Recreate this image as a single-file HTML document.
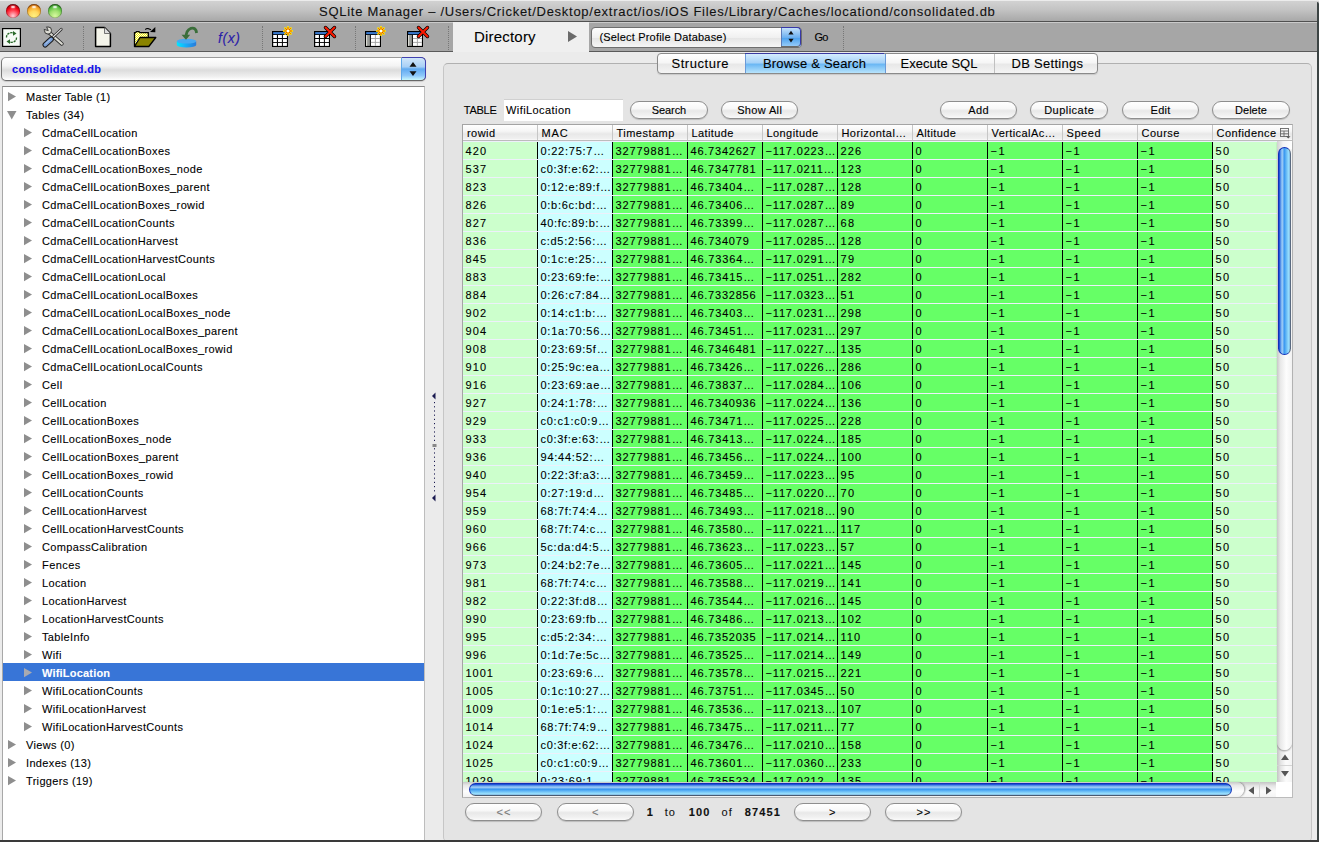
<!DOCTYPE html>
<html><head><meta charset="utf-8"><style>
html,body{margin:0;padding:0;width:1319px;height:842px;overflow:hidden;background:#ebebeb;font-family:"Liberation Sans",sans-serif;}
.r{position:absolute;}
.t{position:absolute;white-space:nowrap;-webkit-text-stroke:0.1px currentColor;}
svg{overflow:visible}
</style></head><body>
<div class="r" style="left:0px;top:0px;width:1319px;height:21px;background:linear-gradient(#ececec 0,#ececec 1px,#d2d2d2 1px,#c4c4c4 45%,#a8a8a8);"></div>
<div class="r" style="left:0px;top:21px;width:1319px;height:1px;background:#505050;"></div>
<div class="r" style="left:6px;top:4px;width:14px;height:14px;border-radius:50%;background:radial-gradient(circle at 50% 85%,#ffd0d8 0,#ff4050 40%,#f00010 62%,#c00010 80%,#801018 100%);box-shadow:inset 0 1px 1.5px rgba(0,0,0,.35), inset 0 0 0 0.6px rgba(0,0,0,.25);"></div>
<div class="r" style="left:11px;top:5.5px;width:4px;height:2px;border-radius:50%;background:rgba(255,255,255,.85);box-shadow:0 0 1.5px 0.5px rgba(255,255,255,.5)"></div>
<div class="r" style="left:27px;top:4px;width:14px;height:14px;border-radius:50%;background:radial-gradient(circle at 50% 85%,#fff080 0,#ffd860 35%,#f8a020 65%,#d06000 82%,#a03800 100%);box-shadow:inset 0 1px 1.5px rgba(0,0,0,.35), inset 0 0 0 0.6px rgba(0,0,0,.25);"></div>
<div class="r" style="left:32px;top:5.5px;width:4px;height:2px;border-radius:50%;background:rgba(255,255,255,.85);box-shadow:0 0 1.5px 0.5px rgba(255,255,255,.5)"></div>
<div class="r" style="left:48px;top:4px;width:14px;height:14px;border-radius:50%;background:radial-gradient(circle at 50% 85%,#d8f8a0 0,#a0e070 38%,#58c040 65%,#309020 82%,#1a5a10 100%);box-shadow:inset 0 1px 1.5px rgba(0,0,0,.35), inset 0 0 0 0.6px rgba(0,0,0,.25);"></div>
<div class="r" style="left:53px;top:5.5px;width:4px;height:2px;border-radius:50%;background:rgba(255,255,255,.85);box-shadow:0 0 1.5px 0.5px rgba(255,255,255,.5)"></div>
<div class="t" style="left:319.00px;top:5.00px;font-size:13px;line-height:13px;letter-spacing:0.725px;color:#111;">SQLite Manager – /Users/Cricket/Desktop/extract/ios/iOS Files/Library/Caches/locationd/consolidated.db</div>
<div class="r" style="left:0px;top:22px;width:1319px;height:1px;background:#cacaca;"></div>
<div class="r" style="left:0px;top:23px;width:1319px;height:28px;background:#a6a6a6;"></div>
<div class="r" style="left:0px;top:51px;width:1319px;height:1px;background:#5a5a5a;"></div>
<div class="r" style="left:453px;top:22px;width:136px;height:30px;background:#efefef;"></div>
<div class="t" style="left:474.00px;top:29.30px;font-size:15px;line-height:15px;letter-spacing:0.198px;color:#000;">Directory</div>
<svg class="r" style="left:568px;top:31px" width="10" height="11"><path d="M0 0L9 5.5L0 11Z" fill="#6a6a6a"/></svg>
<div class="r" style="left:83px;top:26px;width:0;height:24px;border-left:1px dotted #777;"></div>
<div class="r" style="left:262px;top:26px;width:0;height:24px;border-left:1px dotted #777;"></div>
<div class="r" style="left:355px;top:26px;width:0;height:24px;border-left:1px dotted #777;"></div>
<div class="r" style="left:448px;top:26px;width:0;height:24px;border-left:1px dotted #777;"></div>
<div class="r" style="left:843px;top:26px;width:0;height:24px;border-left:1px dotted #777;"></div>
<svg class="r" style="left:2px;top:28px" width="19" height="19" viewBox="0 0 19 19"><rect x="0.6" y="0.6" width="17.8" height="17.8" fill="#f6fbf6" stroke="#000" stroke-width="1.2"/><path d="M4.5 9.5 A5 4.5 0 0 1 12 5.3" fill="none" stroke="#2a6a2a" stroke-width="1.3" stroke-dasharray="2.4 0.8"/><path d="M11 3 L14.5 5.5 L11 7.8Z" fill="#2a6a2a"/><path d="M14.5 9.5 A5 4.5 0 0 1 7 13.7" fill="none" stroke="#2a6a2a" stroke-width="1.3" stroke-dasharray="2.4 0.8"/><path d="M8 11.2 L4.5 13.5 L8 16Z" fill="#2a6a2a"/></svg>
<svg class="r" style="left:42px;top:25px" width="23" height="23" viewBox="0 0 23 23"><path d="M6 6.5 L19.8 18.8" stroke="#2a2a2a" stroke-width="3.8" stroke-linecap="round"/><path d="M6 6.5 L19.8 18.8" stroke="#dcdcd4" stroke-width="2.2" stroke-linecap="round"/><circle cx="6" cy="5.5" r="3.6" fill="#dcdcd4" stroke="#2a2a2a" stroke-width="0.9"/><path d="M6.3 5.6 L4.6 1.2 L3.2 1.6 L1.6 3.3 L1.5 4.6Z" fill="#a6a6a6"/><path d="M6.3 5.6 L4.4 1.6 M6.3 5.6 L1.8 4.4" stroke="#2a2a2a" stroke-width="0.8"/><path d="M19.3 4.2 L9.5 13.5" stroke="#2a2a2a" stroke-width="2.6" stroke-linecap="round"/><path d="M19.3 4.2 L9.5 13.5" stroke="#e8e8e8" stroke-width="1.1" stroke-linecap="round"/><path d="M3.2 19.8 L9.2 14.2" stroke="#1a1a1a" stroke-width="5.4" stroke-linecap="round"/><path d="M3.2 19.8 L9.2 14.2" stroke="#7aa0d8" stroke-width="3.4" stroke-linecap="round"/><path d="M3.8 18.6 L8 14.8" stroke="#b8d0f0" stroke-width="1" stroke-linecap="round"/></svg>
<svg class="r" style="left:94px;top:26px" width="19" height="22" viewBox="0 0 19 22"><path d="M1.6 1.6 H10.5 L16.4 7.5 V20.4 H1.6Z" fill="#f4f4ea" stroke="#000" stroke-width="1.5" stroke-linejoin="round"/><path d="M10.5 1.6 V7.5 H16.4" fill="#ddd" stroke="#555" stroke-width="0.8"/></svg>
<svg class="r" style="left:133px;top:26px" width="25" height="22" viewBox="0 0 25 22"><defs><pattern id="chk" width="2" height="2" patternUnits="userSpaceOnUse"><rect width="2" height="2" fill="#f4f400"/><rect width="1" height="1" fill="#fffff0"/><rect x="1" y="1" width="1" height="1" fill="#fffff0"/></pattern></defs><path d="M1.5 20.5 V6.6 H2.5 L3.5 5.6 H6 L7 6.6 H15.3 V12" fill="url(#chk)" stroke="#000" stroke-width="1.3"/><path d="M1.5 20.5 L7 11.5 H22.8 L15.8 20.5Z" fill="#8a8400" stroke="#000" stroke-width="1.3" stroke-linejoin="round"/><path d="M12.3 3.6 Q13.5 2.2 15 2.6 Q16.5 3.2 18 3.8" fill="none" stroke="#000" stroke-width="1.1"/><path d="M17 6 L22.3 1 L22.3 6.2Z" fill="#000"/></svg>
<svg class="r" style="left:175px;top:25px" width="24" height="24" viewBox="0 0 24 24"><defs><linearGradient id="cyl" x1="0" x2="1"><stop offset="0" stop-color="#00e8ff"/><stop offset="0.5" stop-color="#18a8f8"/><stop offset="1" stop-color="#2a7ad8"/></linearGradient></defs><path d="M1.8 16.2 V20 A9.7 2.6 0 0 0 21.2 20 V16.2Z" fill="url(#cyl)"/><ellipse cx="11.5" cy="16.2" rx="9.7" ry="2.4" fill="#48a8f0"/><path d="M11.2 13 Q10.5 5.5 16 3.3 Q21 2.2 21.6 8" fill="none" stroke="#3a6e3a" stroke-width="2.8"/><path d="M6.5 9.8 L15.2 9.8 L11 14.8Z" fill="#3a6e3a"/></svg>
<div class="t" style="left:218.00px;top:31.15px;font-size:14px;line-height:14px;letter-spacing:0.599px;color:#2a20a8;font-style:italic;">f(x)</div>
<svg class="r" style="left:272px;top:31px" width="16" height="16" viewBox="0 0 16 16"><rect x="0" y="0" width="16" height="16" fill="#000"/><rect x="1.2" y="1.1" width="13.7" height="2.1" fill="#3a7ad0"/><rect x="1.2" y="4" width="3.7" height="3" fill="#fff"/><rect x="1.2" y="8" width="3.7" height="3" fill="#fff"/><rect x="1.2" y="11.9" width="3.7" height="3" fill="#fff"/><rect x="6" y="4" width="3.9" height="3" fill="#fff"/><rect x="6" y="8" width="3.9" height="3" fill="#fff"/><rect x="6" y="11.9" width="3.9" height="3" fill="#fff"/><rect x="10.9" y="4" width="4" height="3" fill="#fff"/><rect x="10.9" y="8" width="4" height="3" fill="#fff"/><rect x="10.9" y="11.9" width="4" height="3" fill="#fff"/></svg>
<svg class="r" style="left:282.6px;top:26.3px" width="10" height="10" viewBox="0 0 10 10"><line x1="6.00" y1="5.00" x2="9.00" y2="5.00" stroke="#ffe800" stroke-width="2.2" stroke-linecap="round"/><line x1="5.71" y1="5.71" x2="7.83" y2="7.83" stroke="#ffe800" stroke-width="2.2" stroke-linecap="round"/><line x1="5.00" y1="6.00" x2="5.00" y2="9.00" stroke="#ffe800" stroke-width="2.2" stroke-linecap="round"/><line x1="4.29" y1="5.71" x2="2.17" y2="7.83" stroke="#ffe800" stroke-width="2.2" stroke-linecap="round"/><line x1="4.00" y1="5.00" x2="1.00" y2="5.00" stroke="#ffe800" stroke-width="2.2" stroke-linecap="round"/><line x1="4.29" y1="4.29" x2="2.17" y2="2.17" stroke="#ffe800" stroke-width="2.2" stroke-linecap="round"/><line x1="5.00" y1="4.00" x2="5.00" y2="1.00" stroke="#ffe800" stroke-width="2.2" stroke-linecap="round"/><line x1="5.71" y1="4.29" x2="7.83" y2="2.17" stroke="#ffe800" stroke-width="2.2" stroke-linecap="round"/><line x1="6.40" y1="5.00" x2="8.80" y2="5.00" stroke="#e83000" stroke-width="0.9"/><line x1="5.99" y1="5.99" x2="7.69" y2="7.69" stroke="#e83000" stroke-width="0.9"/><line x1="5.00" y1="6.40" x2="5.00" y2="8.80" stroke="#e83000" stroke-width="0.9"/><line x1="4.01" y1="5.99" x2="2.31" y2="7.69" stroke="#e83000" stroke-width="0.9"/><line x1="3.60" y1="5.00" x2="1.20" y2="5.00" stroke="#e83000" stroke-width="0.9"/><line x1="4.01" y1="4.01" x2="2.31" y2="2.31" stroke="#e83000" stroke-width="0.9"/><line x1="5.00" y1="3.60" x2="5.00" y2="1.20" stroke="#e83000" stroke-width="0.9"/><line x1="5.99" y1="4.01" x2="7.69" y2="2.31" stroke="#e83000" stroke-width="0.9"/><circle cx="5" cy="5" r="1.3" fill="#fff"/></svg>
<svg class="r" style="left:314px;top:31px" width="16" height="16" viewBox="0 0 16 16"><rect x="0" y="0" width="16" height="16" fill="#000"/><rect x="1.2" y="1.1" width="13.7" height="2.1" fill="#3a7ad0"/><rect x="1.2" y="4" width="3.7" height="3" fill="#fff"/><rect x="1.2" y="8" width="3.7" height="3" fill="#fff"/><rect x="1.2" y="11.9" width="3.7" height="3" fill="#fff"/><rect x="6" y="4" width="3.9" height="3" fill="#fff"/><rect x="6" y="8" width="3.9" height="3" fill="#fff"/><rect x="6" y="11.9" width="3.9" height="3" fill="#fff"/><rect x="10.9" y="4" width="4" height="3" fill="#fff"/><rect x="10.9" y="8" width="4" height="3" fill="#fff"/><rect x="10.9" y="11.9" width="4" height="3" fill="#fff"/></svg>
<svg class="r" style="left:323.7px;top:26.4px" width="12" height="12" viewBox="0 0 12 12"><path d="M1.5 1.5 L10.5 10.5 M10.5 1.5 L1.5 10.5" stroke="#000" stroke-width="3.4" stroke-linecap="round"/><path d="M1.5 1.5 L10.5 10.5 M10.5 1.5 L1.5 10.5" stroke="#ff1a00" stroke-width="2" stroke-linecap="round"/></svg>
<svg class="r" style="left:365px;top:31px" width="16" height="16" viewBox="0 0 16 16"><rect x="0" y="0" width="16" height="16" fill="#000"/><rect x="1.2" y="1.1" width="13.7" height="2.1" fill="#3a7ad0"/><rect x="1.2" y="4" width="3.7" height="10.9" fill="#9a9c98"/><rect x="1.2" y="4" width="0.9" height="10.9" fill="#f0f0e8"/><rect x="5.9" y="4" width="9" height="10.9" fill="#fff"/><path d="M5.9 7.5H14.9M5.9 11.4H14.9M10.4 4V14.9" stroke="#a0a0a0" stroke-width="0.9"/></svg>
<svg class="r" style="left:375.6px;top:26.3px" width="10" height="10" viewBox="0 0 10 10"><line x1="6.00" y1="5.00" x2="9.00" y2="5.00" stroke="#ffe800" stroke-width="2.2" stroke-linecap="round"/><line x1="5.71" y1="5.71" x2="7.83" y2="7.83" stroke="#ffe800" stroke-width="2.2" stroke-linecap="round"/><line x1="5.00" y1="6.00" x2="5.00" y2="9.00" stroke="#ffe800" stroke-width="2.2" stroke-linecap="round"/><line x1="4.29" y1="5.71" x2="2.17" y2="7.83" stroke="#ffe800" stroke-width="2.2" stroke-linecap="round"/><line x1="4.00" y1="5.00" x2="1.00" y2="5.00" stroke="#ffe800" stroke-width="2.2" stroke-linecap="round"/><line x1="4.29" y1="4.29" x2="2.17" y2="2.17" stroke="#ffe800" stroke-width="2.2" stroke-linecap="round"/><line x1="5.00" y1="4.00" x2="5.00" y2="1.00" stroke="#ffe800" stroke-width="2.2" stroke-linecap="round"/><line x1="5.71" y1="4.29" x2="7.83" y2="2.17" stroke="#ffe800" stroke-width="2.2" stroke-linecap="round"/><line x1="6.40" y1="5.00" x2="8.80" y2="5.00" stroke="#e83000" stroke-width="0.9"/><line x1="5.99" y1="5.99" x2="7.69" y2="7.69" stroke="#e83000" stroke-width="0.9"/><line x1="5.00" y1="6.40" x2="5.00" y2="8.80" stroke="#e83000" stroke-width="0.9"/><line x1="4.01" y1="5.99" x2="2.31" y2="7.69" stroke="#e83000" stroke-width="0.9"/><line x1="3.60" y1="5.00" x2="1.20" y2="5.00" stroke="#e83000" stroke-width="0.9"/><line x1="4.01" y1="4.01" x2="2.31" y2="2.31" stroke="#e83000" stroke-width="0.9"/><line x1="5.00" y1="3.60" x2="5.00" y2="1.20" stroke="#e83000" stroke-width="0.9"/><line x1="5.99" y1="4.01" x2="7.69" y2="2.31" stroke="#e83000" stroke-width="0.9"/><circle cx="5" cy="5" r="1.3" fill="#fff"/></svg>
<svg class="r" style="left:407px;top:31px" width="16" height="16" viewBox="0 0 16 16"><rect x="0" y="0" width="16" height="16" fill="#000"/><rect x="1.2" y="1.1" width="13.7" height="2.1" fill="#3a7ad0"/><rect x="1.2" y="4" width="3.7" height="10.9" fill="#9a9c98"/><rect x="1.2" y="4" width="0.9" height="10.9" fill="#f0f0e8"/><rect x="5.9" y="4" width="9" height="10.9" fill="#fff"/><path d="M5.9 7.5H14.9M5.9 11.4H14.9M10.4 4V14.9" stroke="#a0a0a0" stroke-width="0.9"/></svg>
<svg class="r" style="left:416.7px;top:26.4px" width="12" height="12" viewBox="0 0 12 12"><path d="M1.5 1.5 L10.5 10.5 M10.5 1.5 L1.5 10.5" stroke="#000" stroke-width="3.4" stroke-linecap="round"/><path d="M1.5 1.5 L10.5 10.5 M10.5 1.5 L1.5 10.5" stroke="#ff1a00" stroke-width="2" stroke-linecap="round"/></svg>
<div class="r" style="left:591px;top:27px;width:209px;height:19px;border:1px solid #6e6e6e;border-radius:4px;background:linear-gradient(#fdfdfd,#f0f0f0 50%,#e4e4e4 51%,#f6f6f6);overflow:hidden"><div style="position:absolute;right:0;top:0;width:19px;height:19px;background:linear-gradient(#c4e0fa,#6cb0f0 50%,#4aa0ee 51%,#9ed0fa);border-left:1px solid #5a7ab8"></div></div>
<div class="r" style="left:781px;top:27px;width:20px;height:20px;box-sizing:border-box;border:1px solid #3838a8;border-left:none;border-bottom-color:#6a6a6a;border-radius:0 4px 4px 0"></div>
<svg class="r" style="left:786px;top:30px" width="10" height="14" viewBox="0 0 10 14"><path d="M5 0.8 L7.6 4.4 H2.4Z M5 12.4 L7.6 8.8 H2.4Z" fill="#111"/></svg>
<div class="t" style="left:599.40px;top:31.69px;font-size:11px;line-height:11px;letter-spacing:0.194px;color:#000;">(Select Profile Database)</div>
<div class="t" style="left:814.40px;top:31.69px;font-size:11px;line-height:11px;letter-spacing:-0.688px;color:#000;">Go</div>
<!--BODY-->
<div class="r" style="left:1px;top:57px;width:423px;height:22px;border:1px solid #777;border-top-color:#9a9a9a;border-bottom-color:#6a6a6a;border-radius:5px;background:linear-gradient(#ffffff,#f4f4f4 35%,#dcdcdc 55%,#f0f0f0 85%,#fff);overflow:hidden;box-shadow:0 1px 1px rgba(0,0,0,.15)"><div style="position:absolute;right:0;top:0;width:23px;height:22px;background:linear-gradient(#d0e6fa,#a8d0f6 40%,#60aaf0 50%,#8ec8fa 80%,#c8f8fc);border-left:1px solid #60a8e8"></div></div>
<div class="r" style="left:402px;top:57px;width:23px;height:22px;border:1px solid #4040b0;border-left:none;border-bottom-color:#666;border-radius:0 5px 5px 0;"></div>
<svg class="r" style="left:408px;top:61px" width="10" height="16" viewBox="0 0 10 16"><path d="M5 1 L8.5 5.8 H1.5Z M5 15 L8.5 10.2 H1.5Z" fill="#111"/></svg>
<div class="t" style="left:12.00px;top:64.19px;font-size:11px;line-height:11px;letter-spacing:0.330px;color:#1010e8;font-weight:bold;">consolidated.db</div>
<div class="r" style="left:2px;top:86px;width:423px;height:756px;background:#fff;border:1px solid #bdbdbd;border-top-color:#8a8a8a;border-left-color:#a8a8a8;box-sizing:border-box;"></div>
<svg class="r" style="left:8px;top:92px" width="8" height="10" viewBox="0 0 8 10"><path d="M0 0 L8 4.6 L0 9.2Z" fill="#8e8e8e"/></svg>
<div class="t" style="left:26.00px;top:91.69px;font-size:11px;line-height:11px;letter-spacing:0.328px;color:#000;">Master Table (1)</div>
<svg class="r" style="left:7px;top:111px" width="10" height="8" viewBox="0 0 10 8"><path d="M0 0 H9.5 L4.75 8.5Z" fill="#8e8e8e"/></svg>
<div class="t" style="left:26.00px;top:109.69px;font-size:11px;line-height:11px;letter-spacing:0.338px;color:#000;">Tables (34)</div>
<svg class="r" style="left:24px;top:128px" width="8" height="10" viewBox="0 0 8 10"><path d="M0 0 L8 4.6 L0 9.2Z" fill="#8e8e8e"/></svg>
<div class="t" style="left:42.00px;top:127.69px;font-size:11px;line-height:11px;letter-spacing:0.372px;color:#000;">CdmaCellLocation</div>
<svg class="r" style="left:24px;top:146px" width="8" height="10" viewBox="0 0 8 10"><path d="M0 0 L8 4.6 L0 9.2Z" fill="#8e8e8e"/></svg>
<div class="t" style="left:42.00px;top:145.69px;font-size:11px;line-height:11px;letter-spacing:0.374px;color:#000;">CdmaCellLocationBoxes</div>
<svg class="r" style="left:24px;top:164px" width="8" height="10" viewBox="0 0 8 10"><path d="M0 0 L8 4.6 L0 9.2Z" fill="#8e8e8e"/></svg>
<div class="t" style="left:42.00px;top:163.69px;font-size:11px;line-height:11px;letter-spacing:0.375px;color:#000;">CdmaCellLocationBoxes_node</div>
<svg class="r" style="left:24px;top:182px" width="8" height="10" viewBox="0 0 8 10"><path d="M0 0 L8 4.6 L0 9.2Z" fill="#8e8e8e"/></svg>
<div class="t" style="left:42.00px;top:181.69px;font-size:11px;line-height:11px;letter-spacing:0.362px;color:#000;">CdmaCellLocationBoxes_parent</div>
<svg class="r" style="left:24px;top:200px" width="8" height="10" viewBox="0 0 8 10"><path d="M0 0 L8 4.6 L0 9.2Z" fill="#8e8e8e"/></svg>
<div class="t" style="left:42.00px;top:199.69px;font-size:11px;line-height:11px;letter-spacing:0.365px;color:#000;">CdmaCellLocationBoxes_rowid</div>
<svg class="r" style="left:24px;top:218px" width="8" height="10" viewBox="0 0 8 10"><path d="M0 0 L8 4.6 L0 9.2Z" fill="#8e8e8e"/></svg>
<div class="t" style="left:42.00px;top:217.69px;font-size:11px;line-height:11px;letter-spacing:0.368px;color:#000;">CdmaCellLocationCounts</div>
<svg class="r" style="left:24px;top:236px" width="8" height="10" viewBox="0 0 8 10"><path d="M0 0 L8 4.6 L0 9.2Z" fill="#8e8e8e"/></svg>
<div class="t" style="left:42.00px;top:235.69px;font-size:11px;line-height:11px;letter-spacing:0.360px;color:#000;">CdmaCellLocationHarvest</div>
<svg class="r" style="left:24px;top:254px" width="8" height="10" viewBox="0 0 8 10"><path d="M0 0 L8 4.6 L0 9.2Z" fill="#8e8e8e"/></svg>
<div class="t" style="left:42.00px;top:253.69px;font-size:11px;line-height:11px;letter-spacing:0.360px;color:#000;">CdmaCellLocationHarvestCounts</div>
<svg class="r" style="left:24px;top:272px" width="8" height="10" viewBox="0 0 8 10"><path d="M0 0 L8 4.6 L0 9.2Z" fill="#8e8e8e"/></svg>
<div class="t" style="left:42.00px;top:271.69px;font-size:11px;line-height:11px;letter-spacing:0.360px;color:#000;">CdmaCellLocationLocal</div>
<svg class="r" style="left:24px;top:290px" width="8" height="10" viewBox="0 0 8 10"><path d="M0 0 L8 4.6 L0 9.2Z" fill="#8e8e8e"/></svg>
<div class="t" style="left:42.00px;top:289.69px;font-size:11px;line-height:11px;letter-spacing:0.364px;color:#000;">CdmaCellLocationLocalBoxes</div>
<svg class="r" style="left:24px;top:308px" width="8" height="10" viewBox="0 0 8 10"><path d="M0 0 L8 4.6 L0 9.2Z" fill="#8e8e8e"/></svg>
<div class="t" style="left:42.00px;top:307.69px;font-size:11px;line-height:11px;letter-spacing:0.367px;color:#000;">CdmaCellLocationLocalBoxes_node</div>
<svg class="r" style="left:24px;top:326px" width="8" height="10" viewBox="0 0 8 10"><path d="M0 0 L8 4.6 L0 9.2Z" fill="#8e8e8e"/></svg>
<div class="t" style="left:42.00px;top:325.69px;font-size:11px;line-height:11px;letter-spacing:0.357px;color:#000;">CdmaCellLocationLocalBoxes_parent</div>
<svg class="r" style="left:24px;top:344px" width="8" height="10" viewBox="0 0 8 10"><path d="M0 0 L8 4.6 L0 9.2Z" fill="#8e8e8e"/></svg>
<div class="t" style="left:42.00px;top:343.69px;font-size:11px;line-height:11px;letter-spacing:0.358px;color:#000;">CdmaCellLocationLocalBoxes_rowid</div>
<svg class="r" style="left:24px;top:362px" width="8" height="10" viewBox="0 0 8 10"><path d="M0 0 L8 4.6 L0 9.2Z" fill="#8e8e8e"/></svg>
<div class="t" style="left:42.00px;top:361.69px;font-size:11px;line-height:11px;letter-spacing:0.360px;color:#000;">CdmaCellLocationLocalCounts</div>
<svg class="r" style="left:24px;top:380px" width="8" height="10" viewBox="0 0 8 10"><path d="M0 0 L8 4.6 L0 9.2Z" fill="#8e8e8e"/></svg>
<div class="t" style="left:42.00px;top:379.69px;font-size:11px;line-height:11px;letter-spacing:0.391px;color:#000;">Cell</div>
<svg class="r" style="left:24px;top:398px" width="8" height="10" viewBox="0 0 8 10"><path d="M0 0 L8 4.6 L0 9.2Z" fill="#8e8e8e"/></svg>
<div class="t" style="left:42.00px;top:397.69px;font-size:11px;line-height:11px;letter-spacing:0.341px;color:#000;">CellLocation</div>
<svg class="r" style="left:24px;top:416px" width="8" height="10" viewBox="0 0 8 10"><path d="M0 0 L8 4.6 L0 9.2Z" fill="#8e8e8e"/></svg>
<div class="t" style="left:42.00px;top:415.69px;font-size:11px;line-height:11px;letter-spacing:0.353px;color:#000;">CellLocationBoxes</div>
<svg class="r" style="left:24px;top:434px" width="8" height="10" viewBox="0 0 8 10"><path d="M0 0 L8 4.6 L0 9.2Z" fill="#8e8e8e"/></svg>
<div class="t" style="left:42.00px;top:433.69px;font-size:11px;line-height:11px;letter-spacing:0.360px;color:#000;">CellLocationBoxes_node</div>
<svg class="r" style="left:24px;top:452px" width="8" height="10" viewBox="0 0 8 10"><path d="M0 0 L8 4.6 L0 9.2Z" fill="#8e8e8e"/></svg>
<div class="t" style="left:42.00px;top:451.69px;font-size:11px;line-height:11px;letter-spacing:0.346px;color:#000;">CellLocationBoxes_parent</div>
<svg class="r" style="left:24px;top:470px" width="8" height="10" viewBox="0 0 8 10"><path d="M0 0 L8 4.6 L0 9.2Z" fill="#8e8e8e"/></svg>
<div class="t" style="left:42.00px;top:469.69px;font-size:11px;line-height:11px;letter-spacing:0.348px;color:#000;">CellLocationBoxes_rowid</div>
<svg class="r" style="left:24px;top:488px" width="8" height="10" viewBox="0 0 8 10"><path d="M0 0 L8 4.6 L0 9.2Z" fill="#8e8e8e"/></svg>
<div class="t" style="left:42.00px;top:487.69px;font-size:11px;line-height:11px;letter-spacing:0.348px;color:#000;">CellLocationCounts</div>
<svg class="r" style="left:24px;top:506px" width="8" height="10" viewBox="0 0 8 10"><path d="M0 0 L8 4.6 L0 9.2Z" fill="#8e8e8e"/></svg>
<div class="t" style="left:42.00px;top:505.69px;font-size:11px;line-height:11px;letter-spacing:0.339px;color:#000;">CellLocationHarvest</div>
<svg class="r" style="left:24px;top:524px" width="8" height="10" viewBox="0 0 8 10"><path d="M0 0 L8 4.6 L0 9.2Z" fill="#8e8e8e"/></svg>
<div class="t" style="left:42.00px;top:523.69px;font-size:11px;line-height:11px;letter-spacing:0.344px;color:#000;">CellLocationHarvestCounts</div>
<svg class="r" style="left:24px;top:542px" width="8" height="10" viewBox="0 0 8 10"><path d="M0 0 L8 4.6 L0 9.2Z" fill="#8e8e8e"/></svg>
<div class="t" style="left:42.00px;top:541.69px;font-size:11px;line-height:11px;letter-spacing:0.361px;color:#000;">CompassCalibration</div>
<svg class="r" style="left:24px;top:560px" width="8" height="10" viewBox="0 0 8 10"><path d="M0 0 L8 4.6 L0 9.2Z" fill="#8e8e8e"/></svg>
<div class="t" style="left:42.00px;top:559.69px;font-size:11px;line-height:11px;letter-spacing:0.448px;color:#000;">Fences</div>
<svg class="r" style="left:24px;top:578px" width="8" height="10" viewBox="0 0 8 10"><path d="M0 0 L8 4.6 L0 9.2Z" fill="#8e8e8e"/></svg>
<div class="t" style="left:42.00px;top:577.69px;font-size:11px;line-height:11px;letter-spacing:0.369px;color:#000;">Location</div>
<svg class="r" style="left:24px;top:596px" width="8" height="10" viewBox="0 0 8 10"><path d="M0 0 L8 4.6 L0 9.2Z" fill="#8e8e8e"/></svg>
<div class="t" style="left:42.00px;top:595.69px;font-size:11px;line-height:11px;letter-spacing:0.352px;color:#000;">LocationHarvest</div>
<svg class="r" style="left:24px;top:614px" width="8" height="10" viewBox="0 0 8 10"><path d="M0 0 L8 4.6 L0 9.2Z" fill="#8e8e8e"/></svg>
<div class="t" style="left:42.00px;top:613.69px;font-size:11px;line-height:11px;letter-spacing:0.355px;color:#000;">LocationHarvestCounts</div>
<svg class="r" style="left:24px;top:632px" width="8" height="10" viewBox="0 0 8 10"><path d="M0 0 L8 4.6 L0 9.2Z" fill="#8e8e8e"/></svg>
<div class="t" style="left:42.00px;top:631.69px;font-size:11px;line-height:11px;letter-spacing:0.346px;color:#000;">TableInfo</div>
<svg class="r" style="left:24px;top:650px" width="8" height="10" viewBox="0 0 8 10"><path d="M0 0 L8 4.6 L0 9.2Z" fill="#8e8e8e"/></svg>
<div class="t" style="left:42.00px;top:649.69px;font-size:11px;line-height:11px;letter-spacing:0.378px;color:#000;">Wifi</div>
<div class="r" style="left:3px;top:663px;width:421px;height:18px;background:#3875d7;"></div>
<svg class="r" style="left:24px;top:668px" width="8" height="10" viewBox="0 0 8 10"><path d="M0 0 L8 4.6 L0 9.2Z" fill="#a8aab0"/></svg>
<div class="t" style="left:42.00px;top:667.69px;font-size:11px;line-height:11px;letter-spacing:0.193px;color:#fff;font-weight:bold;">WifiLocation</div>
<svg class="r" style="left:24px;top:686px" width="8" height="10" viewBox="0 0 8 10"><path d="M0 0 L8 4.6 L0 9.2Z" fill="#8e8e8e"/></svg>
<div class="t" style="left:42.00px;top:685.69px;font-size:11px;line-height:11px;letter-spacing:0.346px;color:#000;">WifiLocationCounts</div>
<svg class="r" style="left:24px;top:704px" width="8" height="10" viewBox="0 0 8 10"><path d="M0 0 L8 4.6 L0 9.2Z" fill="#8e8e8e"/></svg>
<div class="t" style="left:42.00px;top:703.69px;font-size:11px;line-height:11px;letter-spacing:0.337px;color:#000;">WifiLocationHarvest</div>
<svg class="r" style="left:24px;top:722px" width="8" height="10" viewBox="0 0 8 10"><path d="M0 0 L8 4.6 L0 9.2Z" fill="#8e8e8e"/></svg>
<div class="t" style="left:42.00px;top:721.69px;font-size:11px;line-height:11px;letter-spacing:0.343px;color:#000;">WifiLocationHarvestCounts</div>
<svg class="r" style="left:8px;top:740px" width="8" height="10" viewBox="0 0 8 10"><path d="M0 0 L8 4.6 L0 9.2Z" fill="#8e8e8e"/></svg>
<div class="t" style="left:26.00px;top:739.69px;font-size:11px;line-height:11px;letter-spacing:0.354px;color:#000;">Views (0)</div>
<svg class="r" style="left:8px;top:758px" width="8" height="10" viewBox="0 0 8 10"><path d="M0 0 L8 4.6 L0 9.2Z" fill="#8e8e8e"/></svg>
<div class="t" style="left:26.00px;top:757.69px;font-size:11px;line-height:11px;letter-spacing:0.345px;color:#000;">Indexes (13)</div>
<svg class="r" style="left:8px;top:776px" width="8" height="10" viewBox="0 0 8 10"><path d="M0 0 L8 4.6 L0 9.2Z" fill="#8e8e8e"/></svg>
<div class="t" style="left:26.00px;top:775.69px;font-size:11px;line-height:11px;letter-spacing:0.323px;color:#000;">Triggers (19)</div>
<svg class="r" style="left:431px;top:392px" width="6" height="110" viewBox="0 0 6 110"><path d="M1 4 L4.5 0.5 V7.5Z" fill="#1a1a50"/><path d="M1 106 L4.5 102.5 V109.5Z" fill="#1a1a50"/><path d="M3.5 10 V100" stroke="#1a1a50" stroke-width="1" stroke-dasharray="1.2 3"/><rect x="1.5" y="52" width="4" height="3" fill="#888"/></svg>
<div class="r" style="left:443px;top:63px;width:869px;height:779px;background:#e4e4e4;border:1px solid #c6c6c6;border-top-color:#b0b0b0;border-radius:5px;box-sizing:border-box;"></div>
<div class="r" style="left:657px;top:53px;width:441px;height:21px;border:1px solid #8a8a8a;border-radius:4px;box-sizing:border-box;background:linear-gradient(#ffffff,#f6f6f6 45%,#e8e8e8 55%,#f4f4f4);overflow:hidden;box-shadow:0 1px 1px rgba(0,0,0,.12)"><div style="position:absolute;left:87px;top:0;width:139px;height:19px;background:linear-gradient(#d4ecfe,#a6d2f8 45%,#6cb8f4 55%,#b8e4fc);border-left:1px solid #6a9ad8;border-right:1px solid #6a9ad8;"></div><div style="position:absolute;left:336px;top:0;width:1px;height:19px;background:#c0c0c0"></div></div>
<div class="r" style="left:745px;top:53px;width:139px;height:1px;background:#3a3aa0;"></div>
<div class="t" style="left:671.50px;top:57.30px;font-size:13px;line-height:13px;letter-spacing:0.531px;color:#000;">Structure</div>
<div class="t" style="left:763.00px;top:57.30px;font-size:13px;line-height:13px;letter-spacing:0.182px;color:#000;">Browse &amp; Search</div>
<div class="t" style="left:900.50px;top:57.30px;font-size:13px;line-height:13px;letter-spacing:0.039px;color:#000;">Execute SQL</div>
<div class="t" style="left:1011.50px;top:57.30px;font-size:13px;line-height:13px;letter-spacing:0.284px;color:#000;">DB Settings</div>
<div class="t" style="left:463.80px;top:104.69px;font-size:11px;line-height:11px;letter-spacing:-0.266px;color:#000;">TABLE</div>
<div class="r" style="left:504px;top:99px;width:119px;height:22px;background:#fff;border-top:1px solid #d0d0d0;box-sizing:border-box;"></div>
<div class="t" style="left:506.00px;top:104.69px;font-size:11px;line-height:11px;letter-spacing:0.424px;color:#000;">WifiLocation</div>
<div class="r" style="left:630px;top:101px;width:78px;height:18px;box-sizing:border-box;border:1px solid #8e8e8e;border-radius:9.0px;background:linear-gradient(#ffffff,#f8f8f8 40%,#e8e8e8 55%,#f2f2f2 85%,#fafafa);box-shadow:0 1px 1px rgba(0,0,0,.18)"></div>
<div class="t" style="left:651.75px;top:104.69px;font-size:11px;line-height:11px;letter-spacing:-0.075px;color:#000;">Search</div>
<div class="r" style="left:721px;top:101px;width:77px;height:18px;box-sizing:border-box;border:1px solid #8e8e8e;border-radius:9.0px;background:linear-gradient(#ffffff,#f8f8f8 40%,#e8e8e8 55%,#f2f2f2 85%,#fafafa);box-shadow:0 1px 1px rgba(0,0,0,.18)"></div>
<div class="t" style="left:737.15px;top:104.69px;font-size:11px;line-height:11px;letter-spacing:0.357px;color:#000;">Show All</div>
<div class="r" style="left:940px;top:101px;width:77px;height:18px;box-sizing:border-box;border:1px solid #8e8e8e;border-radius:9.0px;background:linear-gradient(#ffffff,#f8f8f8 40%,#e8e8e8 55%,#f2f2f2 85%,#fafafa);box-shadow:0 1px 1px rgba(0,0,0,.18)"></div>
<div class="t" style="left:968.25px;top:104.69px;font-size:11px;line-height:11px;letter-spacing:0.453px;color:#000;">Add</div>
<div class="r" style="left:1030px;top:101px;width:78px;height:18px;box-sizing:border-box;border:1px solid #8e8e8e;border-radius:9.0px;background:linear-gradient(#ffffff,#f8f8f8 40%,#e8e8e8 55%,#f2f2f2 85%,#fafafa);box-shadow:0 1px 1px rgba(0,0,0,.18)"></div>
<div class="t" style="left:1044.15px;top:104.69px;font-size:11px;line-height:11px;letter-spacing:0.478px;color:#000;">Duplicate</div>
<div class="r" style="left:1122px;top:101px;width:77px;height:18px;box-sizing:border-box;border:1px solid #8e8e8e;border-radius:9.0px;background:linear-gradient(#ffffff,#f8f8f8 40%,#e8e8e8 55%,#f2f2f2 85%,#fafafa);box-shadow:0 1px 1px rgba(0,0,0,.18)"></div>
<div class="t" style="left:1150.60px;top:104.69px;font-size:11px;line-height:11px;letter-spacing:0.277px;color:#000;">Edit</div>
<div class="r" style="left:1212px;top:101px;width:78px;height:18px;box-sizing:border-box;border:1px solid #8e8e8e;border-radius:9.0px;background:linear-gradient(#ffffff,#f8f8f8 40%,#e8e8e8 55%,#f2f2f2 85%,#fafafa);box-shadow:0 1px 1px rgba(0,0,0,.18)"></div>
<div class="t" style="left:1235.00px;top:104.69px;font-size:11px;line-height:11px;letter-spacing:0.037px;color:#000;">Delete</div>
<div class="r" style="left:462px;top:124px;width:831px;height:674px;background:#fff;border:1px solid #a4a4a4;border-right-color:#bcbcbc;border-bottom-color:#bcbcbc;box-sizing:border-box;"></div>
<div class="r" style="left:463px;top:125px;width:829px;height:15px;background:linear-gradient(#ffffff,#f6f6f6 40%,#e8e8e8 60%,#f0f0f0 90%,#fafafa);"></div>
<div class="r" style="left:463px;top:140px;width:829px;height:1px;background:#bcbcbc;"></div>
<div class="t" style="left:467.00px;top:127.69px;font-size:11px;line-height:11px;letter-spacing:0.460px;color:#000;">rowid</div>
<div class="r" style="left:537px;top:125px;width:1px;height:15px;background:#c6c6c6;"></div>
<div class="t" style="left:541.50px;top:127.69px;font-size:11px;line-height:11px;letter-spacing:0.855px;color:#000;">MAC</div>
<div class="r" style="left:612px;top:125px;width:1px;height:15px;background:#c6c6c6;"></div>
<div class="t" style="left:616.50px;top:127.69px;font-size:11px;line-height:11px;letter-spacing:0.473px;color:#000;">Timestamp</div>
<div class="r" style="left:687px;top:125px;width:1px;height:15px;background:#c6c6c6;"></div>
<div class="t" style="left:691.50px;top:127.69px;font-size:11px;line-height:11px;letter-spacing:0.392px;color:#000;">Latitude</div>
<div class="r" style="left:762px;top:125px;width:1px;height:15px;background:#c6c6c6;"></div>
<div class="t" style="left:766.50px;top:127.69px;font-size:11px;line-height:11px;letter-spacing:0.423px;color:#000;">Longitude</div>
<div class="r" style="left:837px;top:125px;width:1px;height:15px;background:#c6c6c6;"></div>
<div class="t" style="left:841.50px;top:127.69px;font-size:11px;line-height:11px;letter-spacing:0.424px;color:#000;">Horizontal…</div>
<div class="r" style="left:912px;top:125px;width:1px;height:15px;background:#c6c6c6;"></div>
<div class="t" style="left:916.50px;top:127.69px;font-size:11px;line-height:11px;letter-spacing:0.367px;color:#000;">Altitude</div>
<div class="r" style="left:987px;top:125px;width:1px;height:15px;background:#c6c6c6;"></div>
<div class="t" style="left:991.50px;top:127.69px;font-size:11px;line-height:11px;letter-spacing:0.419px;color:#000;">VerticalAc…</div>
<div class="r" style="left:1062px;top:125px;width:1px;height:15px;background:#c6c6c6;"></div>
<div class="t" style="left:1066.50px;top:127.69px;font-size:11px;line-height:11px;letter-spacing:0.557px;color:#000;">Speed</div>
<div class="r" style="left:1137px;top:125px;width:1px;height:15px;background:#c6c6c6;"></div>
<div class="t" style="left:1141.50px;top:127.69px;font-size:11px;line-height:11px;letter-spacing:0.497px;color:#000;">Course</div>
<div class="r" style="left:1212px;top:125px;width:1px;height:15px;background:#c6c6c6;"></div>
<div class="t" style="left:1216.50px;top:127.69px;font-size:11px;line-height:11px;letter-spacing:0.433px;color:#000;">Confidence</div>
<svg class="r" style="left:1280px;top:128px" width="11" height="11" viewBox="0 0 11 11"><rect x="0.5" y="0.5" width="8" height="8" fill="none" stroke="#666" stroke-width="0.9"/><path d="M0.5 3H8.5M4 3V8.5M0.5 5.8H8.5" stroke="#666" stroke-width="0.9"/><path d="M6 8.2 H10.5 L8.25 10.6Z" fill="#555"/></svg>
<div class="r" style="left:463px;top:141px;width:814px;height:641px;overflow:hidden;background:#edf0fa">
<div style="position:absolute;left:0px;top:0;width:74px;height:641px;background:repeating-linear-gradient(#edf0fa 0,#edf0fa 1px,#ccffcc 1px,#ccffcc 18px)"></div>
<div style="position:absolute;left:74px;top:0;width:75px;height:641px;background:repeating-linear-gradient(#edf0fa 0,#edf0fa 1px,#ccffff 1px,#ccffff 18px)"></div>
<div style="position:absolute;left:74px;top:0;width:1px;height:641px;background:repeating-linear-gradient(#edf0fa 0,#edf0fa 1px,#000 1px,#000 18px)"></div>
<div style="position:absolute;left:149px;top:0;width:75px;height:641px;background:repeating-linear-gradient(#edf0fa 0,#edf0fa 1px,#66ff66 1px,#66ff66 18px)"></div>
<div style="position:absolute;left:149px;top:0;width:1px;height:641px;background:repeating-linear-gradient(#edf0fa 0,#edf0fa 1px,#000 1px,#000 18px)"></div>
<div style="position:absolute;left:224px;top:0;width:75px;height:641px;background:repeating-linear-gradient(#edf0fa 0,#edf0fa 1px,#66ff66 1px,#66ff66 18px)"></div>
<div style="position:absolute;left:224px;top:0;width:1px;height:641px;background:repeating-linear-gradient(#edf0fa 0,#edf0fa 1px,#000 1px,#000 18px)"></div>
<div style="position:absolute;left:299px;top:0;width:75px;height:641px;background:repeating-linear-gradient(#edf0fa 0,#edf0fa 1px,#66ff66 1px,#66ff66 18px)"></div>
<div style="position:absolute;left:299px;top:0;width:1px;height:641px;background:repeating-linear-gradient(#edf0fa 0,#edf0fa 1px,#000 1px,#000 18px)"></div>
<div style="position:absolute;left:374px;top:0;width:75px;height:641px;background:repeating-linear-gradient(#edf0fa 0,#edf0fa 1px,#66ff66 1px,#66ff66 18px)"></div>
<div style="position:absolute;left:374px;top:0;width:1px;height:641px;background:repeating-linear-gradient(#edf0fa 0,#edf0fa 1px,#000 1px,#000 18px)"></div>
<div style="position:absolute;left:449px;top:0;width:75px;height:641px;background:repeating-linear-gradient(#edf0fa 0,#edf0fa 1px,#66ff66 1px,#66ff66 18px)"></div>
<div style="position:absolute;left:449px;top:0;width:1px;height:641px;background:repeating-linear-gradient(#edf0fa 0,#edf0fa 1px,#000 1px,#000 18px)"></div>
<div style="position:absolute;left:524px;top:0;width:75px;height:641px;background:repeating-linear-gradient(#edf0fa 0,#edf0fa 1px,#66ff66 1px,#66ff66 18px)"></div>
<div style="position:absolute;left:524px;top:0;width:1px;height:641px;background:repeating-linear-gradient(#edf0fa 0,#edf0fa 1px,#000 1px,#000 18px)"></div>
<div style="position:absolute;left:599px;top:0;width:75px;height:641px;background:repeating-linear-gradient(#edf0fa 0,#edf0fa 1px,#66ff66 1px,#66ff66 18px)"></div>
<div style="position:absolute;left:599px;top:0;width:1px;height:641px;background:repeating-linear-gradient(#edf0fa 0,#edf0fa 1px,#000 1px,#000 18px)"></div>
<div style="position:absolute;left:674px;top:0;width:75px;height:641px;background:repeating-linear-gradient(#edf0fa 0,#edf0fa 1px,#66ff66 1px,#66ff66 18px)"></div>
<div style="position:absolute;left:674px;top:0;width:1px;height:641px;background:repeating-linear-gradient(#edf0fa 0,#edf0fa 1px,#000 1px,#000 18px)"></div>
<div style="position:absolute;left:749px;top:0;width:65px;height:641px;background:repeating-linear-gradient(#edf0fa 0,#edf0fa 1px,#ccffcc 1px,#ccffcc 18px)"></div>
<div style="position:absolute;left:749px;top:0;width:1px;height:641px;background:repeating-linear-gradient(#edf0fa 0,#edf0fa 1px,#000 1px,#000 18px)"></div>
</div>
<div class="t" style="left:465.50px;top:145.69px;font-size:11px;line-height:11px;letter-spacing:1.103px;color:#000;">420</div>
<div class="t" style="left:540.50px;top:145.69px;font-size:11px;line-height:11px;letter-spacing:0.759px;color:#000;">0:22:75:7…</div>
<div class="t" style="left:615.50px;top:145.69px;font-size:11px;line-height:11px;letter-spacing:0.900px;color:#000;">32779881…</div>
<div class="t" style="left:690.50px;top:145.69px;font-size:11px;line-height:11px;letter-spacing:0.776px;color:#000;">46.7342627</div>
<div class="t" style="left:765.50px;top:145.69px;font-size:11px;line-height:11px;letter-spacing:0.834px;color:#000;">−117.0223…</div>
<div class="t" style="left:840.50px;top:145.69px;font-size:11px;line-height:11px;letter-spacing:1.103px;color:#000;">226</div>
<div class="t" style="left:915.50px;top:145.69px;font-size:11px;line-height:11px;letter-spacing:0.000px;color:#000;">0</div>
<div class="t" style="left:990.50px;top:145.69px;font-size:11px;line-height:11px;letter-spacing:1.506px;color:#000;">−1</div>
<div class="t" style="left:1065.50px;top:145.69px;font-size:11px;line-height:11px;letter-spacing:1.506px;color:#000;">−1</div>
<div class="t" style="left:1140.50px;top:145.69px;font-size:11px;line-height:11px;letter-spacing:1.506px;color:#000;">−1</div>
<div class="t" style="left:1215.50px;top:145.69px;font-size:11px;line-height:11px;letter-spacing:1.470px;color:#000;">50</div>
<div class="t" style="left:465.50px;top:163.69px;font-size:11px;line-height:11px;letter-spacing:1.103px;color:#000;">537</div>
<div class="t" style="left:540.50px;top:163.69px;font-size:11px;line-height:11px;letter-spacing:0.681px;color:#000;">c0:3f:e:62:…</div>
<div class="t" style="left:615.50px;top:163.69px;font-size:11px;line-height:11px;letter-spacing:0.900px;color:#000;">32779881…</div>
<div class="t" style="left:690.50px;top:163.69px;font-size:11px;line-height:11px;letter-spacing:0.776px;color:#000;">46.7347781</div>
<div class="t" style="left:765.50px;top:163.69px;font-size:11px;line-height:11px;letter-spacing:0.823px;color:#000;">−117.0211…</div>
<div class="t" style="left:840.50px;top:163.69px;font-size:11px;line-height:11px;letter-spacing:1.103px;color:#000;">123</div>
<div class="t" style="left:915.50px;top:163.69px;font-size:11px;line-height:11px;letter-spacing:0.000px;color:#000;">0</div>
<div class="t" style="left:990.50px;top:163.69px;font-size:11px;line-height:11px;letter-spacing:1.506px;color:#000;">−1</div>
<div class="t" style="left:1065.50px;top:163.69px;font-size:11px;line-height:11px;letter-spacing:1.506px;color:#000;">−1</div>
<div class="t" style="left:1140.50px;top:163.69px;font-size:11px;line-height:11px;letter-spacing:1.506px;color:#000;">−1</div>
<div class="t" style="left:1215.50px;top:163.69px;font-size:11px;line-height:11px;letter-spacing:1.470px;color:#000;">50</div>
<div class="t" style="left:465.50px;top:181.69px;font-size:11px;line-height:11px;letter-spacing:1.103px;color:#000;">823</div>
<div class="t" style="left:540.50px;top:181.69px;font-size:11px;line-height:11px;letter-spacing:0.688px;color:#000;">0:12:e:89:f…</div>
<div class="t" style="left:615.50px;top:181.69px;font-size:11px;line-height:11px;letter-spacing:0.900px;color:#000;">32779881…</div>
<div class="t" style="left:690.50px;top:181.69px;font-size:11px;line-height:11px;letter-spacing:0.854px;color:#000;">46.73404…</div>
<div class="t" style="left:765.50px;top:181.69px;font-size:11px;line-height:11px;letter-spacing:0.834px;color:#000;">−117.0287…</div>
<div class="t" style="left:840.50px;top:181.69px;font-size:11px;line-height:11px;letter-spacing:1.103px;color:#000;">128</div>
<div class="t" style="left:915.50px;top:181.69px;font-size:11px;line-height:11px;letter-spacing:0.000px;color:#000;">0</div>
<div class="t" style="left:990.50px;top:181.69px;font-size:11px;line-height:11px;letter-spacing:1.506px;color:#000;">−1</div>
<div class="t" style="left:1065.50px;top:181.69px;font-size:11px;line-height:11px;letter-spacing:1.506px;color:#000;">−1</div>
<div class="t" style="left:1140.50px;top:181.69px;font-size:11px;line-height:11px;letter-spacing:1.506px;color:#000;">−1</div>
<div class="t" style="left:1215.50px;top:181.69px;font-size:11px;line-height:11px;letter-spacing:1.470px;color:#000;">50</div>
<div class="t" style="left:465.50px;top:199.69px;font-size:11px;line-height:11px;letter-spacing:1.103px;color:#000;">826</div>
<div class="t" style="left:540.50px;top:199.69px;font-size:11px;line-height:11px;letter-spacing:0.713px;color:#000;">0:b:6c:bd:…</div>
<div class="t" style="left:615.50px;top:199.69px;font-size:11px;line-height:11px;letter-spacing:0.900px;color:#000;">32779881…</div>
<div class="t" style="left:690.50px;top:199.69px;font-size:11px;line-height:11px;letter-spacing:0.854px;color:#000;">46.73406…</div>
<div class="t" style="left:765.50px;top:199.69px;font-size:11px;line-height:11px;letter-spacing:0.834px;color:#000;">−117.0287…</div>
<div class="t" style="left:840.50px;top:199.69px;font-size:11px;line-height:11px;letter-spacing:1.470px;color:#000;">89</div>
<div class="t" style="left:915.50px;top:199.69px;font-size:11px;line-height:11px;letter-spacing:0.000px;color:#000;">0</div>
<div class="t" style="left:990.50px;top:199.69px;font-size:11px;line-height:11px;letter-spacing:1.506px;color:#000;">−1</div>
<div class="t" style="left:1065.50px;top:199.69px;font-size:11px;line-height:11px;letter-spacing:1.506px;color:#000;">−1</div>
<div class="t" style="left:1140.50px;top:199.69px;font-size:11px;line-height:11px;letter-spacing:1.506px;color:#000;">−1</div>
<div class="t" style="left:1215.50px;top:199.69px;font-size:11px;line-height:11px;letter-spacing:1.470px;color:#000;">50</div>
<div class="t" style="left:465.50px;top:217.69px;font-size:11px;line-height:11px;letter-spacing:1.103px;color:#000;">827</div>
<div class="t" style="left:540.50px;top:217.69px;font-size:11px;line-height:11px;letter-spacing:0.681px;color:#000;">40:fc:89:b:…</div>
<div class="t" style="left:615.50px;top:217.69px;font-size:11px;line-height:11px;letter-spacing:0.900px;color:#000;">32779881…</div>
<div class="t" style="left:690.50px;top:217.69px;font-size:11px;line-height:11px;letter-spacing:0.854px;color:#000;">46.73399…</div>
<div class="t" style="left:765.50px;top:217.69px;font-size:11px;line-height:11px;letter-spacing:0.834px;color:#000;">−117.0287…</div>
<div class="t" style="left:840.50px;top:217.69px;font-size:11px;line-height:11px;letter-spacing:1.470px;color:#000;">68</div>
<div class="t" style="left:915.50px;top:217.69px;font-size:11px;line-height:11px;letter-spacing:0.000px;color:#000;">0</div>
<div class="t" style="left:990.50px;top:217.69px;font-size:11px;line-height:11px;letter-spacing:1.506px;color:#000;">−1</div>
<div class="t" style="left:1065.50px;top:217.69px;font-size:11px;line-height:11px;letter-spacing:1.506px;color:#000;">−1</div>
<div class="t" style="left:1140.50px;top:217.69px;font-size:11px;line-height:11px;letter-spacing:1.506px;color:#000;">−1</div>
<div class="t" style="left:1215.50px;top:217.69px;font-size:11px;line-height:11px;letter-spacing:1.470px;color:#000;">50</div>
<div class="t" style="left:465.50px;top:235.69px;font-size:11px;line-height:11px;letter-spacing:1.103px;color:#000;">836</div>
<div class="t" style="left:540.50px;top:235.69px;font-size:11px;line-height:11px;letter-spacing:0.713px;color:#000;">c:d5:2:56:…</div>
<div class="t" style="left:615.50px;top:235.69px;font-size:11px;line-height:11px;letter-spacing:0.900px;color:#000;">32779881…</div>
<div class="t" style="left:690.50px;top:235.69px;font-size:11px;line-height:11px;letter-spacing:0.781px;color:#000;">46.734079</div>
<div class="t" style="left:765.50px;top:235.69px;font-size:11px;line-height:11px;letter-spacing:0.834px;color:#000;">−117.0285…</div>
<div class="t" style="left:840.50px;top:235.69px;font-size:11px;line-height:11px;letter-spacing:1.103px;color:#000;">128</div>
<div class="t" style="left:915.50px;top:235.69px;font-size:11px;line-height:11px;letter-spacing:0.000px;color:#000;">0</div>
<div class="t" style="left:990.50px;top:235.69px;font-size:11px;line-height:11px;letter-spacing:1.506px;color:#000;">−1</div>
<div class="t" style="left:1065.50px;top:235.69px;font-size:11px;line-height:11px;letter-spacing:1.506px;color:#000;">−1</div>
<div class="t" style="left:1140.50px;top:235.69px;font-size:11px;line-height:11px;letter-spacing:1.506px;color:#000;">−1</div>
<div class="t" style="left:1215.50px;top:235.69px;font-size:11px;line-height:11px;letter-spacing:1.470px;color:#000;">50</div>
<div class="t" style="left:465.50px;top:253.69px;font-size:11px;line-height:11px;letter-spacing:1.103px;color:#000;">845</div>
<div class="t" style="left:540.50px;top:253.69px;font-size:11px;line-height:11px;letter-spacing:0.713px;color:#000;">0:1c:e:25:…</div>
<div class="t" style="left:615.50px;top:253.69px;font-size:11px;line-height:11px;letter-spacing:0.900px;color:#000;">32779881…</div>
<div class="t" style="left:690.50px;top:253.69px;font-size:11px;line-height:11px;letter-spacing:0.854px;color:#000;">46.73364…</div>
<div class="t" style="left:765.50px;top:253.69px;font-size:11px;line-height:11px;letter-spacing:0.834px;color:#000;">−117.0291…</div>
<div class="t" style="left:840.50px;top:253.69px;font-size:11px;line-height:11px;letter-spacing:1.470px;color:#000;">79</div>
<div class="t" style="left:915.50px;top:253.69px;font-size:11px;line-height:11px;letter-spacing:0.000px;color:#000;">0</div>
<div class="t" style="left:990.50px;top:253.69px;font-size:11px;line-height:11px;letter-spacing:1.506px;color:#000;">−1</div>
<div class="t" style="left:1065.50px;top:253.69px;font-size:11px;line-height:11px;letter-spacing:1.506px;color:#000;">−1</div>
<div class="t" style="left:1140.50px;top:253.69px;font-size:11px;line-height:11px;letter-spacing:1.506px;color:#000;">−1</div>
<div class="t" style="left:1215.50px;top:253.69px;font-size:11px;line-height:11px;letter-spacing:1.470px;color:#000;">50</div>
<div class="t" style="left:465.50px;top:271.69px;font-size:11px;line-height:11px;letter-spacing:1.103px;color:#000;">883</div>
<div class="t" style="left:540.50px;top:271.69px;font-size:11px;line-height:11px;letter-spacing:0.688px;color:#000;">0:23:69:fe:…</div>
<div class="t" style="left:615.50px;top:271.69px;font-size:11px;line-height:11px;letter-spacing:0.900px;color:#000;">32779881…</div>
<div class="t" style="left:690.50px;top:271.69px;font-size:11px;line-height:11px;letter-spacing:0.854px;color:#000;">46.73415…</div>
<div class="t" style="left:765.50px;top:271.69px;font-size:11px;line-height:11px;letter-spacing:0.834px;color:#000;">−117.0251…</div>
<div class="t" style="left:840.50px;top:271.69px;font-size:11px;line-height:11px;letter-spacing:1.103px;color:#000;">282</div>
<div class="t" style="left:915.50px;top:271.69px;font-size:11px;line-height:11px;letter-spacing:0.000px;color:#000;">0</div>
<div class="t" style="left:990.50px;top:271.69px;font-size:11px;line-height:11px;letter-spacing:1.506px;color:#000;">−1</div>
<div class="t" style="left:1065.50px;top:271.69px;font-size:11px;line-height:11px;letter-spacing:1.506px;color:#000;">−1</div>
<div class="t" style="left:1140.50px;top:271.69px;font-size:11px;line-height:11px;letter-spacing:1.506px;color:#000;">−1</div>
<div class="t" style="left:1215.50px;top:271.69px;font-size:11px;line-height:11px;letter-spacing:1.470px;color:#000;">50</div>
<div class="t" style="left:465.50px;top:289.69px;font-size:11px;line-height:11px;letter-spacing:1.103px;color:#000;">884</div>
<div class="t" style="left:540.50px;top:289.69px;font-size:11px;line-height:11px;letter-spacing:0.749px;color:#000;">0:26:c7:84…</div>
<div class="t" style="left:615.50px;top:289.69px;font-size:11px;line-height:11px;letter-spacing:0.900px;color:#000;">32779881…</div>
<div class="t" style="left:690.50px;top:289.69px;font-size:11px;line-height:11px;letter-spacing:0.776px;color:#000;">46.7332856</div>
<div class="t" style="left:765.50px;top:289.69px;font-size:11px;line-height:11px;letter-spacing:0.834px;color:#000;">−117.0323…</div>
<div class="t" style="left:840.50px;top:289.69px;font-size:11px;line-height:11px;letter-spacing:1.470px;color:#000;">51</div>
<div class="t" style="left:915.50px;top:289.69px;font-size:11px;line-height:11px;letter-spacing:0.000px;color:#000;">0</div>
<div class="t" style="left:990.50px;top:289.69px;font-size:11px;line-height:11px;letter-spacing:1.506px;color:#000;">−1</div>
<div class="t" style="left:1065.50px;top:289.69px;font-size:11px;line-height:11px;letter-spacing:1.506px;color:#000;">−1</div>
<div class="t" style="left:1140.50px;top:289.69px;font-size:11px;line-height:11px;letter-spacing:1.506px;color:#000;">−1</div>
<div class="t" style="left:1215.50px;top:289.69px;font-size:11px;line-height:11px;letter-spacing:1.470px;color:#000;">50</div>
<div class="t" style="left:465.50px;top:307.69px;font-size:11px;line-height:11px;letter-spacing:1.103px;color:#000;">902</div>
<div class="t" style="left:540.50px;top:307.69px;font-size:11px;line-height:11px;letter-spacing:0.713px;color:#000;">0:14:c1:b:…</div>
<div class="t" style="left:615.50px;top:307.69px;font-size:11px;line-height:11px;letter-spacing:0.900px;color:#000;">32779881…</div>
<div class="t" style="left:690.50px;top:307.69px;font-size:11px;line-height:11px;letter-spacing:0.854px;color:#000;">46.73403…</div>
<div class="t" style="left:765.50px;top:307.69px;font-size:11px;line-height:11px;letter-spacing:0.834px;color:#000;">−117.0231…</div>
<div class="t" style="left:840.50px;top:307.69px;font-size:11px;line-height:11px;letter-spacing:1.103px;color:#000;">298</div>
<div class="t" style="left:915.50px;top:307.69px;font-size:11px;line-height:11px;letter-spacing:0.000px;color:#000;">0</div>
<div class="t" style="left:990.50px;top:307.69px;font-size:11px;line-height:11px;letter-spacing:1.506px;color:#000;">−1</div>
<div class="t" style="left:1065.50px;top:307.69px;font-size:11px;line-height:11px;letter-spacing:1.506px;color:#000;">−1</div>
<div class="t" style="left:1140.50px;top:307.69px;font-size:11px;line-height:11px;letter-spacing:1.506px;color:#000;">−1</div>
<div class="t" style="left:1215.50px;top:307.69px;font-size:11px;line-height:11px;letter-spacing:1.470px;color:#000;">50</div>
<div class="t" style="left:465.50px;top:325.69px;font-size:11px;line-height:11px;letter-spacing:1.103px;color:#000;">904</div>
<div class="t" style="left:540.50px;top:325.69px;font-size:11px;line-height:11px;letter-spacing:0.757px;color:#000;">0:1a:70:56…</div>
<div class="t" style="left:615.50px;top:325.69px;font-size:11px;line-height:11px;letter-spacing:0.900px;color:#000;">32779881…</div>
<div class="t" style="left:690.50px;top:325.69px;font-size:11px;line-height:11px;letter-spacing:0.854px;color:#000;">46.73451…</div>
<div class="t" style="left:765.50px;top:325.69px;font-size:11px;line-height:11px;letter-spacing:0.834px;color:#000;">−117.0231…</div>
<div class="t" style="left:840.50px;top:325.69px;font-size:11px;line-height:11px;letter-spacing:1.103px;color:#000;">297</div>
<div class="t" style="left:915.50px;top:325.69px;font-size:11px;line-height:11px;letter-spacing:0.000px;color:#000;">0</div>
<div class="t" style="left:990.50px;top:325.69px;font-size:11px;line-height:11px;letter-spacing:1.506px;color:#000;">−1</div>
<div class="t" style="left:1065.50px;top:325.69px;font-size:11px;line-height:11px;letter-spacing:1.506px;color:#000;">−1</div>
<div class="t" style="left:1140.50px;top:325.69px;font-size:11px;line-height:11px;letter-spacing:1.506px;color:#000;">−1</div>
<div class="t" style="left:1215.50px;top:325.69px;font-size:11px;line-height:11px;letter-spacing:1.470px;color:#000;">50</div>
<div class="t" style="left:465.50px;top:343.69px;font-size:11px;line-height:11px;letter-spacing:1.103px;color:#000;">908</div>
<div class="t" style="left:540.50px;top:343.69px;font-size:11px;line-height:11px;letter-spacing:0.720px;color:#000;">0:23:69:5f…</div>
<div class="t" style="left:615.50px;top:343.69px;font-size:11px;line-height:11px;letter-spacing:0.900px;color:#000;">32779881…</div>
<div class="t" style="left:690.50px;top:343.69px;font-size:11px;line-height:11px;letter-spacing:0.776px;color:#000;">46.7346481</div>
<div class="t" style="left:765.50px;top:343.69px;font-size:11px;line-height:11px;letter-spacing:0.834px;color:#000;">−117.0227…</div>
<div class="t" style="left:840.50px;top:343.69px;font-size:11px;line-height:11px;letter-spacing:1.103px;color:#000;">135</div>
<div class="t" style="left:915.50px;top:343.69px;font-size:11px;line-height:11px;letter-spacing:0.000px;color:#000;">0</div>
<div class="t" style="left:990.50px;top:343.69px;font-size:11px;line-height:11px;letter-spacing:1.506px;color:#000;">−1</div>
<div class="t" style="left:1065.50px;top:343.69px;font-size:11px;line-height:11px;letter-spacing:1.506px;color:#000;">−1</div>
<div class="t" style="left:1140.50px;top:343.69px;font-size:11px;line-height:11px;letter-spacing:1.506px;color:#000;">−1</div>
<div class="t" style="left:1215.50px;top:343.69px;font-size:11px;line-height:11px;letter-spacing:1.470px;color:#000;">50</div>
<div class="t" style="left:465.50px;top:361.69px;font-size:11px;line-height:11px;letter-spacing:1.103px;color:#000;">910</div>
<div class="t" style="left:540.50px;top:361.69px;font-size:11px;line-height:11px;letter-spacing:0.749px;color:#000;">0:25:9c:ea…</div>
<div class="t" style="left:615.50px;top:361.69px;font-size:11px;line-height:11px;letter-spacing:0.900px;color:#000;">32779881…</div>
<div class="t" style="left:690.50px;top:361.69px;font-size:11px;line-height:11px;letter-spacing:0.854px;color:#000;">46.73426…</div>
<div class="t" style="left:765.50px;top:361.69px;font-size:11px;line-height:11px;letter-spacing:0.834px;color:#000;">−117.0226…</div>
<div class="t" style="left:840.50px;top:361.69px;font-size:11px;line-height:11px;letter-spacing:1.103px;color:#000;">286</div>
<div class="t" style="left:915.50px;top:361.69px;font-size:11px;line-height:11px;letter-spacing:0.000px;color:#000;">0</div>
<div class="t" style="left:990.50px;top:361.69px;font-size:11px;line-height:11px;letter-spacing:1.506px;color:#000;">−1</div>
<div class="t" style="left:1065.50px;top:361.69px;font-size:11px;line-height:11px;letter-spacing:1.506px;color:#000;">−1</div>
<div class="t" style="left:1140.50px;top:361.69px;font-size:11px;line-height:11px;letter-spacing:1.506px;color:#000;">−1</div>
<div class="t" style="left:1215.50px;top:361.69px;font-size:11px;line-height:11px;letter-spacing:1.470px;color:#000;">50</div>
<div class="t" style="left:465.50px;top:379.69px;font-size:11px;line-height:11px;letter-spacing:1.103px;color:#000;">916</div>
<div class="t" style="left:540.50px;top:379.69px;font-size:11px;line-height:11px;letter-spacing:0.757px;color:#000;">0:23:69:ae…</div>
<div class="t" style="left:615.50px;top:379.69px;font-size:11px;line-height:11px;letter-spacing:0.900px;color:#000;">32779881…</div>
<div class="t" style="left:690.50px;top:379.69px;font-size:11px;line-height:11px;letter-spacing:0.854px;color:#000;">46.73837…</div>
<div class="t" style="left:765.50px;top:379.69px;font-size:11px;line-height:11px;letter-spacing:0.834px;color:#000;">−117.0284…</div>
<div class="t" style="left:840.50px;top:379.69px;font-size:11px;line-height:11px;letter-spacing:1.103px;color:#000;">106</div>
<div class="t" style="left:915.50px;top:379.69px;font-size:11px;line-height:11px;letter-spacing:0.000px;color:#000;">0</div>
<div class="t" style="left:990.50px;top:379.69px;font-size:11px;line-height:11px;letter-spacing:1.506px;color:#000;">−1</div>
<div class="t" style="left:1065.50px;top:379.69px;font-size:11px;line-height:11px;letter-spacing:1.506px;color:#000;">−1</div>
<div class="t" style="left:1140.50px;top:379.69px;font-size:11px;line-height:11px;letter-spacing:1.506px;color:#000;">−1</div>
<div class="t" style="left:1215.50px;top:379.69px;font-size:11px;line-height:11px;letter-spacing:1.470px;color:#000;">50</div>
<div class="t" style="left:465.50px;top:397.69px;font-size:11px;line-height:11px;letter-spacing:1.103px;color:#000;">927</div>
<div class="t" style="left:540.50px;top:397.69px;font-size:11px;line-height:11px;letter-spacing:0.720px;color:#000;">0:24:1:78:…</div>
<div class="t" style="left:615.50px;top:397.69px;font-size:11px;line-height:11px;letter-spacing:0.900px;color:#000;">32779881…</div>
<div class="t" style="left:690.50px;top:397.69px;font-size:11px;line-height:11px;letter-spacing:0.776px;color:#000;">46.7340936</div>
<div class="t" style="left:765.50px;top:397.69px;font-size:11px;line-height:11px;letter-spacing:0.834px;color:#000;">−117.0224…</div>
<div class="t" style="left:840.50px;top:397.69px;font-size:11px;line-height:11px;letter-spacing:1.103px;color:#000;">136</div>
<div class="t" style="left:915.50px;top:397.69px;font-size:11px;line-height:11px;letter-spacing:0.000px;color:#000;">0</div>
<div class="t" style="left:990.50px;top:397.69px;font-size:11px;line-height:11px;letter-spacing:1.506px;color:#000;">−1</div>
<div class="t" style="left:1065.50px;top:397.69px;font-size:11px;line-height:11px;letter-spacing:1.506px;color:#000;">−1</div>
<div class="t" style="left:1140.50px;top:397.69px;font-size:11px;line-height:11px;letter-spacing:1.506px;color:#000;">−1</div>
<div class="t" style="left:1215.50px;top:397.69px;font-size:11px;line-height:11px;letter-spacing:1.470px;color:#000;">50</div>
<div class="t" style="left:465.50px;top:415.69px;font-size:11px;line-height:11px;letter-spacing:1.103px;color:#000;">929</div>
<div class="t" style="left:540.50px;top:415.69px;font-size:11px;line-height:11px;letter-spacing:0.734px;color:#000;">c0:c1:c0:9…</div>
<div class="t" style="left:615.50px;top:415.69px;font-size:11px;line-height:11px;letter-spacing:0.900px;color:#000;">32779881…</div>
<div class="t" style="left:690.50px;top:415.69px;font-size:11px;line-height:11px;letter-spacing:0.854px;color:#000;">46.73471…</div>
<div class="t" style="left:765.50px;top:415.69px;font-size:11px;line-height:11px;letter-spacing:0.834px;color:#000;">−117.0225…</div>
<div class="t" style="left:840.50px;top:415.69px;font-size:11px;line-height:11px;letter-spacing:1.103px;color:#000;">228</div>
<div class="t" style="left:915.50px;top:415.69px;font-size:11px;line-height:11px;letter-spacing:0.000px;color:#000;">0</div>
<div class="t" style="left:990.50px;top:415.69px;font-size:11px;line-height:11px;letter-spacing:1.506px;color:#000;">−1</div>
<div class="t" style="left:1065.50px;top:415.69px;font-size:11px;line-height:11px;letter-spacing:1.506px;color:#000;">−1</div>
<div class="t" style="left:1140.50px;top:415.69px;font-size:11px;line-height:11px;letter-spacing:1.506px;color:#000;">−1</div>
<div class="t" style="left:1215.50px;top:415.69px;font-size:11px;line-height:11px;letter-spacing:1.470px;color:#000;">50</div>
<div class="t" style="left:465.50px;top:433.69px;font-size:11px;line-height:11px;letter-spacing:1.103px;color:#000;">933</div>
<div class="t" style="left:540.50px;top:433.69px;font-size:11px;line-height:11px;letter-spacing:0.681px;color:#000;">c0:3f:e:63:…</div>
<div class="t" style="left:615.50px;top:433.69px;font-size:11px;line-height:11px;letter-spacing:0.900px;color:#000;">32779881…</div>
<div class="t" style="left:690.50px;top:433.69px;font-size:11px;line-height:11px;letter-spacing:0.854px;color:#000;">46.73413…</div>
<div class="t" style="left:765.50px;top:433.69px;font-size:11px;line-height:11px;letter-spacing:0.834px;color:#000;">−117.0224…</div>
<div class="t" style="left:840.50px;top:433.69px;font-size:11px;line-height:11px;letter-spacing:1.103px;color:#000;">185</div>
<div class="t" style="left:915.50px;top:433.69px;font-size:11px;line-height:11px;letter-spacing:0.000px;color:#000;">0</div>
<div class="t" style="left:990.50px;top:433.69px;font-size:11px;line-height:11px;letter-spacing:1.506px;color:#000;">−1</div>
<div class="t" style="left:1065.50px;top:433.69px;font-size:11px;line-height:11px;letter-spacing:1.506px;color:#000;">−1</div>
<div class="t" style="left:1140.50px;top:433.69px;font-size:11px;line-height:11px;letter-spacing:1.506px;color:#000;">−1</div>
<div class="t" style="left:1215.50px;top:433.69px;font-size:11px;line-height:11px;letter-spacing:1.470px;color:#000;">50</div>
<div class="t" style="left:465.50px;top:451.69px;font-size:11px;line-height:11px;letter-spacing:1.103px;color:#000;">936</div>
<div class="t" style="left:540.50px;top:451.69px;font-size:11px;line-height:11px;letter-spacing:0.759px;color:#000;">94:44:52:…</div>
<div class="t" style="left:615.50px;top:451.69px;font-size:11px;line-height:11px;letter-spacing:0.900px;color:#000;">32779881…</div>
<div class="t" style="left:690.50px;top:451.69px;font-size:11px;line-height:11px;letter-spacing:0.854px;color:#000;">46.73456…</div>
<div class="t" style="left:765.50px;top:451.69px;font-size:11px;line-height:11px;letter-spacing:0.834px;color:#000;">−117.0224…</div>
<div class="t" style="left:840.50px;top:451.69px;font-size:11px;line-height:11px;letter-spacing:1.103px;color:#000;">100</div>
<div class="t" style="left:915.50px;top:451.69px;font-size:11px;line-height:11px;letter-spacing:0.000px;color:#000;">0</div>
<div class="t" style="left:990.50px;top:451.69px;font-size:11px;line-height:11px;letter-spacing:1.506px;color:#000;">−1</div>
<div class="t" style="left:1065.50px;top:451.69px;font-size:11px;line-height:11px;letter-spacing:1.506px;color:#000;">−1</div>
<div class="t" style="left:1140.50px;top:451.69px;font-size:11px;line-height:11px;letter-spacing:1.506px;color:#000;">−1</div>
<div class="t" style="left:1215.50px;top:451.69px;font-size:11px;line-height:11px;letter-spacing:1.470px;color:#000;">50</div>
<div class="t" style="left:465.50px;top:469.69px;font-size:11px;line-height:11px;letter-spacing:1.103px;color:#000;">940</div>
<div class="t" style="left:540.50px;top:469.69px;font-size:11px;line-height:11px;letter-spacing:0.688px;color:#000;">0:22:3f:a3:…</div>
<div class="t" style="left:615.50px;top:469.69px;font-size:11px;line-height:11px;letter-spacing:0.900px;color:#000;">32779881…</div>
<div class="t" style="left:690.50px;top:469.69px;font-size:11px;line-height:11px;letter-spacing:0.854px;color:#000;">46.73459…</div>
<div class="t" style="left:765.50px;top:469.69px;font-size:11px;line-height:11px;letter-spacing:0.834px;color:#000;">−117.0223…</div>
<div class="t" style="left:840.50px;top:469.69px;font-size:11px;line-height:11px;letter-spacing:1.470px;color:#000;">95</div>
<div class="t" style="left:915.50px;top:469.69px;font-size:11px;line-height:11px;letter-spacing:0.000px;color:#000;">0</div>
<div class="t" style="left:990.50px;top:469.69px;font-size:11px;line-height:11px;letter-spacing:1.506px;color:#000;">−1</div>
<div class="t" style="left:1065.50px;top:469.69px;font-size:11px;line-height:11px;letter-spacing:1.506px;color:#000;">−1</div>
<div class="t" style="left:1140.50px;top:469.69px;font-size:11px;line-height:11px;letter-spacing:1.506px;color:#000;">−1</div>
<div class="t" style="left:1215.50px;top:469.69px;font-size:11px;line-height:11px;letter-spacing:1.470px;color:#000;">50</div>
<div class="t" style="left:465.50px;top:487.69px;font-size:11px;line-height:11px;letter-spacing:1.103px;color:#000;">954</div>
<div class="t" style="left:540.50px;top:487.69px;font-size:11px;line-height:11px;letter-spacing:0.759px;color:#000;">0:27:19:d…</div>
<div class="t" style="left:615.50px;top:487.69px;font-size:11px;line-height:11px;letter-spacing:0.900px;color:#000;">32779881…</div>
<div class="t" style="left:690.50px;top:487.69px;font-size:11px;line-height:11px;letter-spacing:0.854px;color:#000;">46.73485…</div>
<div class="t" style="left:765.50px;top:487.69px;font-size:11px;line-height:11px;letter-spacing:0.834px;color:#000;">−117.0220…</div>
<div class="t" style="left:840.50px;top:487.69px;font-size:11px;line-height:11px;letter-spacing:1.470px;color:#000;">70</div>
<div class="t" style="left:915.50px;top:487.69px;font-size:11px;line-height:11px;letter-spacing:0.000px;color:#000;">0</div>
<div class="t" style="left:990.50px;top:487.69px;font-size:11px;line-height:11px;letter-spacing:1.506px;color:#000;">−1</div>
<div class="t" style="left:1065.50px;top:487.69px;font-size:11px;line-height:11px;letter-spacing:1.506px;color:#000;">−1</div>
<div class="t" style="left:1140.50px;top:487.69px;font-size:11px;line-height:11px;letter-spacing:1.506px;color:#000;">−1</div>
<div class="t" style="left:1215.50px;top:487.69px;font-size:11px;line-height:11px;letter-spacing:1.470px;color:#000;">50</div>
<div class="t" style="left:465.50px;top:505.69px;font-size:11px;line-height:11px;letter-spacing:1.103px;color:#000;">959</div>
<div class="t" style="left:540.50px;top:505.69px;font-size:11px;line-height:11px;letter-spacing:0.720px;color:#000;">68:7f:74:4…</div>
<div class="t" style="left:615.50px;top:505.69px;font-size:11px;line-height:11px;letter-spacing:0.900px;color:#000;">32779881…</div>
<div class="t" style="left:690.50px;top:505.69px;font-size:11px;line-height:11px;letter-spacing:0.854px;color:#000;">46.73493…</div>
<div class="t" style="left:765.50px;top:505.69px;font-size:11px;line-height:11px;letter-spacing:0.834px;color:#000;">−117.0218…</div>
<div class="t" style="left:840.50px;top:505.69px;font-size:11px;line-height:11px;letter-spacing:1.470px;color:#000;">90</div>
<div class="t" style="left:915.50px;top:505.69px;font-size:11px;line-height:11px;letter-spacing:0.000px;color:#000;">0</div>
<div class="t" style="left:990.50px;top:505.69px;font-size:11px;line-height:11px;letter-spacing:1.506px;color:#000;">−1</div>
<div class="t" style="left:1065.50px;top:505.69px;font-size:11px;line-height:11px;letter-spacing:1.506px;color:#000;">−1</div>
<div class="t" style="left:1140.50px;top:505.69px;font-size:11px;line-height:11px;letter-spacing:1.506px;color:#000;">−1</div>
<div class="t" style="left:1215.50px;top:505.69px;font-size:11px;line-height:11px;letter-spacing:1.470px;color:#000;">50</div>
<div class="t" style="left:465.50px;top:523.69px;font-size:11px;line-height:11px;letter-spacing:1.103px;color:#000;">960</div>
<div class="t" style="left:540.50px;top:523.69px;font-size:11px;line-height:11px;letter-spacing:0.713px;color:#000;">68:7f:74:c…</div>
<div class="t" style="left:615.50px;top:523.69px;font-size:11px;line-height:11px;letter-spacing:0.900px;color:#000;">32779881…</div>
<div class="t" style="left:690.50px;top:523.69px;font-size:11px;line-height:11px;letter-spacing:0.854px;color:#000;">46.73580…</div>
<div class="t" style="left:765.50px;top:523.69px;font-size:11px;line-height:11px;letter-spacing:0.834px;color:#000;">−117.0221…</div>
<div class="t" style="left:840.50px;top:523.69px;font-size:11px;line-height:11px;letter-spacing:1.054px;color:#000;">117</div>
<div class="t" style="left:915.50px;top:523.69px;font-size:11px;line-height:11px;letter-spacing:0.000px;color:#000;">0</div>
<div class="t" style="left:990.50px;top:523.69px;font-size:11px;line-height:11px;letter-spacing:1.506px;color:#000;">−1</div>
<div class="t" style="left:1065.50px;top:523.69px;font-size:11px;line-height:11px;letter-spacing:1.506px;color:#000;">−1</div>
<div class="t" style="left:1140.50px;top:523.69px;font-size:11px;line-height:11px;letter-spacing:1.506px;color:#000;">−1</div>
<div class="t" style="left:1215.50px;top:523.69px;font-size:11px;line-height:11px;letter-spacing:1.470px;color:#000;">50</div>
<div class="t" style="left:465.50px;top:541.69px;font-size:11px;line-height:11px;letter-spacing:1.103px;color:#000;">966</div>
<div class="t" style="left:540.50px;top:541.69px;font-size:11px;line-height:11px;letter-spacing:0.749px;color:#000;">5c:da:d4:5…</div>
<div class="t" style="left:615.50px;top:541.69px;font-size:11px;line-height:11px;letter-spacing:0.900px;color:#000;">32779881…</div>
<div class="t" style="left:690.50px;top:541.69px;font-size:11px;line-height:11px;letter-spacing:0.854px;color:#000;">46.73623…</div>
<div class="t" style="left:765.50px;top:541.69px;font-size:11px;line-height:11px;letter-spacing:0.834px;color:#000;">−117.0223…</div>
<div class="t" style="left:840.50px;top:541.69px;font-size:11px;line-height:11px;letter-spacing:1.470px;color:#000;">57</div>
<div class="t" style="left:915.50px;top:541.69px;font-size:11px;line-height:11px;letter-spacing:0.000px;color:#000;">0</div>
<div class="t" style="left:990.50px;top:541.69px;font-size:11px;line-height:11px;letter-spacing:1.506px;color:#000;">−1</div>
<div class="t" style="left:1065.50px;top:541.69px;font-size:11px;line-height:11px;letter-spacing:1.506px;color:#000;">−1</div>
<div class="t" style="left:1140.50px;top:541.69px;font-size:11px;line-height:11px;letter-spacing:1.506px;color:#000;">−1</div>
<div class="t" style="left:1215.50px;top:541.69px;font-size:11px;line-height:11px;letter-spacing:1.470px;color:#000;">50</div>
<div class="t" style="left:465.50px;top:559.69px;font-size:11px;line-height:11px;letter-spacing:1.103px;color:#000;">973</div>
<div class="t" style="left:540.50px;top:559.69px;font-size:11px;line-height:11px;letter-spacing:0.757px;color:#000;">0:24:b2:7e…</div>
<div class="t" style="left:615.50px;top:559.69px;font-size:11px;line-height:11px;letter-spacing:0.900px;color:#000;">32779881…</div>
<div class="t" style="left:690.50px;top:559.69px;font-size:11px;line-height:11px;letter-spacing:0.854px;color:#000;">46.73605…</div>
<div class="t" style="left:765.50px;top:559.69px;font-size:11px;line-height:11px;letter-spacing:0.834px;color:#000;">−117.0221…</div>
<div class="t" style="left:840.50px;top:559.69px;font-size:11px;line-height:11px;letter-spacing:1.103px;color:#000;">145</div>
<div class="t" style="left:915.50px;top:559.69px;font-size:11px;line-height:11px;letter-spacing:0.000px;color:#000;">0</div>
<div class="t" style="left:990.50px;top:559.69px;font-size:11px;line-height:11px;letter-spacing:1.506px;color:#000;">−1</div>
<div class="t" style="left:1065.50px;top:559.69px;font-size:11px;line-height:11px;letter-spacing:1.506px;color:#000;">−1</div>
<div class="t" style="left:1140.50px;top:559.69px;font-size:11px;line-height:11px;letter-spacing:1.506px;color:#000;">−1</div>
<div class="t" style="left:1215.50px;top:559.69px;font-size:11px;line-height:11px;letter-spacing:1.470px;color:#000;">50</div>
<div class="t" style="left:465.50px;top:577.69px;font-size:11px;line-height:11px;letter-spacing:1.103px;color:#000;">981</div>
<div class="t" style="left:540.50px;top:577.69px;font-size:11px;line-height:11px;letter-spacing:0.713px;color:#000;">68:7f:74:c…</div>
<div class="t" style="left:615.50px;top:577.69px;font-size:11px;line-height:11px;letter-spacing:0.900px;color:#000;">32779881…</div>
<div class="t" style="left:690.50px;top:577.69px;font-size:11px;line-height:11px;letter-spacing:0.854px;color:#000;">46.73588…</div>
<div class="t" style="left:765.50px;top:577.69px;font-size:11px;line-height:11px;letter-spacing:0.834px;color:#000;">−117.0219…</div>
<div class="t" style="left:840.50px;top:577.69px;font-size:11px;line-height:11px;letter-spacing:1.103px;color:#000;">141</div>
<div class="t" style="left:915.50px;top:577.69px;font-size:11px;line-height:11px;letter-spacing:0.000px;color:#000;">0</div>
<div class="t" style="left:990.50px;top:577.69px;font-size:11px;line-height:11px;letter-spacing:1.506px;color:#000;">−1</div>
<div class="t" style="left:1065.50px;top:577.69px;font-size:11px;line-height:11px;letter-spacing:1.506px;color:#000;">−1</div>
<div class="t" style="left:1140.50px;top:577.69px;font-size:11px;line-height:11px;letter-spacing:1.506px;color:#000;">−1</div>
<div class="t" style="left:1215.50px;top:577.69px;font-size:11px;line-height:11px;letter-spacing:1.470px;color:#000;">50</div>
<div class="t" style="left:465.50px;top:595.69px;font-size:11px;line-height:11px;letter-spacing:1.103px;color:#000;">982</div>
<div class="t" style="left:540.50px;top:595.69px;font-size:11px;line-height:11px;letter-spacing:0.720px;color:#000;">0:22:3f:d8…</div>
<div class="t" style="left:615.50px;top:595.69px;font-size:11px;line-height:11px;letter-spacing:0.900px;color:#000;">32779881…</div>
<div class="t" style="left:690.50px;top:595.69px;font-size:11px;line-height:11px;letter-spacing:0.854px;color:#000;">46.73544…</div>
<div class="t" style="left:765.50px;top:595.69px;font-size:11px;line-height:11px;letter-spacing:0.834px;color:#000;">−117.0216…</div>
<div class="t" style="left:840.50px;top:595.69px;font-size:11px;line-height:11px;letter-spacing:1.103px;color:#000;">145</div>
<div class="t" style="left:915.50px;top:595.69px;font-size:11px;line-height:11px;letter-spacing:0.000px;color:#000;">0</div>
<div class="t" style="left:990.50px;top:595.69px;font-size:11px;line-height:11px;letter-spacing:1.506px;color:#000;">−1</div>
<div class="t" style="left:1065.50px;top:595.69px;font-size:11px;line-height:11px;letter-spacing:1.506px;color:#000;">−1</div>
<div class="t" style="left:1140.50px;top:595.69px;font-size:11px;line-height:11px;letter-spacing:1.506px;color:#000;">−1</div>
<div class="t" style="left:1215.50px;top:595.69px;font-size:11px;line-height:11px;letter-spacing:1.470px;color:#000;">50</div>
<div class="t" style="left:465.50px;top:613.69px;font-size:11px;line-height:11px;letter-spacing:1.103px;color:#000;">990</div>
<div class="t" style="left:540.50px;top:613.69px;font-size:11px;line-height:11px;letter-spacing:0.720px;color:#000;">0:23:69:fb…</div>
<div class="t" style="left:615.50px;top:613.69px;font-size:11px;line-height:11px;letter-spacing:0.900px;color:#000;">32779881…</div>
<div class="t" style="left:690.50px;top:613.69px;font-size:11px;line-height:11px;letter-spacing:0.854px;color:#000;">46.73486…</div>
<div class="t" style="left:765.50px;top:613.69px;font-size:11px;line-height:11px;letter-spacing:0.834px;color:#000;">−117.0213…</div>
<div class="t" style="left:840.50px;top:613.69px;font-size:11px;line-height:11px;letter-spacing:1.103px;color:#000;">102</div>
<div class="t" style="left:915.50px;top:613.69px;font-size:11px;line-height:11px;letter-spacing:0.000px;color:#000;">0</div>
<div class="t" style="left:990.50px;top:613.69px;font-size:11px;line-height:11px;letter-spacing:1.506px;color:#000;">−1</div>
<div class="t" style="left:1065.50px;top:613.69px;font-size:11px;line-height:11px;letter-spacing:1.506px;color:#000;">−1</div>
<div class="t" style="left:1140.50px;top:613.69px;font-size:11px;line-height:11px;letter-spacing:1.506px;color:#000;">−1</div>
<div class="t" style="left:1215.50px;top:613.69px;font-size:11px;line-height:11px;letter-spacing:1.470px;color:#000;">50</div>
<div class="t" style="left:465.50px;top:631.69px;font-size:11px;line-height:11px;letter-spacing:1.103px;color:#000;">995</div>
<div class="t" style="left:540.50px;top:631.69px;font-size:11px;line-height:11px;letter-spacing:0.713px;color:#000;">c:d5:2:34:…</div>
<div class="t" style="left:615.50px;top:631.69px;font-size:11px;line-height:11px;letter-spacing:0.900px;color:#000;">32779881…</div>
<div class="t" style="left:690.50px;top:631.69px;font-size:11px;line-height:11px;letter-spacing:0.776px;color:#000;">46.7352035</div>
<div class="t" style="left:765.50px;top:631.69px;font-size:11px;line-height:11px;letter-spacing:0.834px;color:#000;">−117.0214…</div>
<div class="t" style="left:840.50px;top:631.69px;font-size:11px;line-height:11px;letter-spacing:1.054px;color:#000;">110</div>
<div class="t" style="left:915.50px;top:631.69px;font-size:11px;line-height:11px;letter-spacing:0.000px;color:#000;">0</div>
<div class="t" style="left:990.50px;top:631.69px;font-size:11px;line-height:11px;letter-spacing:1.506px;color:#000;">−1</div>
<div class="t" style="left:1065.50px;top:631.69px;font-size:11px;line-height:11px;letter-spacing:1.506px;color:#000;">−1</div>
<div class="t" style="left:1140.50px;top:631.69px;font-size:11px;line-height:11px;letter-spacing:1.506px;color:#000;">−1</div>
<div class="t" style="left:1215.50px;top:631.69px;font-size:11px;line-height:11px;letter-spacing:1.470px;color:#000;">50</div>
<div class="t" style="left:465.50px;top:649.69px;font-size:11px;line-height:11px;letter-spacing:1.103px;color:#000;">996</div>
<div class="t" style="left:540.50px;top:649.69px;font-size:11px;line-height:11px;letter-spacing:0.749px;color:#000;">0:1d:7e:5c…</div>
<div class="t" style="left:615.50px;top:649.69px;font-size:11px;line-height:11px;letter-spacing:0.900px;color:#000;">32779881…</div>
<div class="t" style="left:690.50px;top:649.69px;font-size:11px;line-height:11px;letter-spacing:0.854px;color:#000;">46.73525…</div>
<div class="t" style="left:765.50px;top:649.69px;font-size:11px;line-height:11px;letter-spacing:0.834px;color:#000;">−117.0214…</div>
<div class="t" style="left:840.50px;top:649.69px;font-size:11px;line-height:11px;letter-spacing:1.103px;color:#000;">149</div>
<div class="t" style="left:915.50px;top:649.69px;font-size:11px;line-height:11px;letter-spacing:0.000px;color:#000;">0</div>
<div class="t" style="left:990.50px;top:649.69px;font-size:11px;line-height:11px;letter-spacing:1.506px;color:#000;">−1</div>
<div class="t" style="left:1065.50px;top:649.69px;font-size:11px;line-height:11px;letter-spacing:1.506px;color:#000;">−1</div>
<div class="t" style="left:1140.50px;top:649.69px;font-size:11px;line-height:11px;letter-spacing:1.506px;color:#000;">−1</div>
<div class="t" style="left:1215.50px;top:649.69px;font-size:11px;line-height:11px;letter-spacing:1.470px;color:#000;">50</div>
<div class="t" style="left:465.50px;top:667.69px;font-size:11px;line-height:11px;letter-spacing:0.980px;color:#000;">1001</div>
<div class="t" style="left:540.50px;top:667.69px;font-size:11px;line-height:11px;letter-spacing:0.759px;color:#000;">0:23:69:6…</div>
<div class="t" style="left:615.50px;top:667.69px;font-size:11px;line-height:11px;letter-spacing:0.900px;color:#000;">32779881…</div>
<div class="t" style="left:690.50px;top:667.69px;font-size:11px;line-height:11px;letter-spacing:0.854px;color:#000;">46.73578…</div>
<div class="t" style="left:765.50px;top:667.69px;font-size:11px;line-height:11px;letter-spacing:0.834px;color:#000;">−117.0215…</div>
<div class="t" style="left:840.50px;top:667.69px;font-size:11px;line-height:11px;letter-spacing:1.103px;color:#000;">221</div>
<div class="t" style="left:915.50px;top:667.69px;font-size:11px;line-height:11px;letter-spacing:0.000px;color:#000;">0</div>
<div class="t" style="left:990.50px;top:667.69px;font-size:11px;line-height:11px;letter-spacing:1.506px;color:#000;">−1</div>
<div class="t" style="left:1065.50px;top:667.69px;font-size:11px;line-height:11px;letter-spacing:1.506px;color:#000;">−1</div>
<div class="t" style="left:1140.50px;top:667.69px;font-size:11px;line-height:11px;letter-spacing:1.506px;color:#000;">−1</div>
<div class="t" style="left:1215.50px;top:667.69px;font-size:11px;line-height:11px;letter-spacing:1.470px;color:#000;">50</div>
<div class="t" style="left:465.50px;top:685.69px;font-size:11px;line-height:11px;letter-spacing:0.980px;color:#000;">1005</div>
<div class="t" style="left:540.50px;top:685.69px;font-size:11px;line-height:11px;letter-spacing:0.749px;color:#000;">0:1c:10:27…</div>
<div class="t" style="left:615.50px;top:685.69px;font-size:11px;line-height:11px;letter-spacing:0.900px;color:#000;">32779881…</div>
<div class="t" style="left:690.50px;top:685.69px;font-size:11px;line-height:11px;letter-spacing:0.854px;color:#000;">46.73751…</div>
<div class="t" style="left:765.50px;top:685.69px;font-size:11px;line-height:11px;letter-spacing:0.834px;color:#000;">−117.0345…</div>
<div class="t" style="left:840.50px;top:685.69px;font-size:11px;line-height:11px;letter-spacing:1.470px;color:#000;">50</div>
<div class="t" style="left:915.50px;top:685.69px;font-size:11px;line-height:11px;letter-spacing:0.000px;color:#000;">0</div>
<div class="t" style="left:990.50px;top:685.69px;font-size:11px;line-height:11px;letter-spacing:1.506px;color:#000;">−1</div>
<div class="t" style="left:1065.50px;top:685.69px;font-size:11px;line-height:11px;letter-spacing:1.506px;color:#000;">−1</div>
<div class="t" style="left:1140.50px;top:685.69px;font-size:11px;line-height:11px;letter-spacing:1.506px;color:#000;">−1</div>
<div class="t" style="left:1215.50px;top:685.69px;font-size:11px;line-height:11px;letter-spacing:1.470px;color:#000;">50</div>
<div class="t" style="left:465.50px;top:703.69px;font-size:11px;line-height:11px;letter-spacing:0.980px;color:#000;">1009</div>
<div class="t" style="left:540.50px;top:703.69px;font-size:11px;line-height:11px;letter-spacing:0.720px;color:#000;">0:1e:e5:1:…</div>
<div class="t" style="left:615.50px;top:703.69px;font-size:11px;line-height:11px;letter-spacing:0.900px;color:#000;">32779881…</div>
<div class="t" style="left:690.50px;top:703.69px;font-size:11px;line-height:11px;letter-spacing:0.854px;color:#000;">46.73536…</div>
<div class="t" style="left:765.50px;top:703.69px;font-size:11px;line-height:11px;letter-spacing:0.834px;color:#000;">−117.0213…</div>
<div class="t" style="left:840.50px;top:703.69px;font-size:11px;line-height:11px;letter-spacing:1.103px;color:#000;">107</div>
<div class="t" style="left:915.50px;top:703.69px;font-size:11px;line-height:11px;letter-spacing:0.000px;color:#000;">0</div>
<div class="t" style="left:990.50px;top:703.69px;font-size:11px;line-height:11px;letter-spacing:1.506px;color:#000;">−1</div>
<div class="t" style="left:1065.50px;top:703.69px;font-size:11px;line-height:11px;letter-spacing:1.506px;color:#000;">−1</div>
<div class="t" style="left:1140.50px;top:703.69px;font-size:11px;line-height:11px;letter-spacing:1.506px;color:#000;">−1</div>
<div class="t" style="left:1215.50px;top:703.69px;font-size:11px;line-height:11px;letter-spacing:1.470px;color:#000;">50</div>
<div class="t" style="left:465.50px;top:721.69px;font-size:11px;line-height:11px;letter-spacing:0.980px;color:#000;">1014</div>
<div class="t" style="left:540.50px;top:721.69px;font-size:11px;line-height:11px;letter-spacing:0.720px;color:#000;">68:7f:74:9…</div>
<div class="t" style="left:615.50px;top:721.69px;font-size:11px;line-height:11px;letter-spacing:0.900px;color:#000;">32779881…</div>
<div class="t" style="left:690.50px;top:721.69px;font-size:11px;line-height:11px;letter-spacing:0.854px;color:#000;">46.73475…</div>
<div class="t" style="left:765.50px;top:721.69px;font-size:11px;line-height:11px;letter-spacing:0.823px;color:#000;">−117.0211…</div>
<div class="t" style="left:840.50px;top:721.69px;font-size:11px;line-height:11px;letter-spacing:1.470px;color:#000;">77</div>
<div class="t" style="left:915.50px;top:721.69px;font-size:11px;line-height:11px;letter-spacing:0.000px;color:#000;">0</div>
<div class="t" style="left:990.50px;top:721.69px;font-size:11px;line-height:11px;letter-spacing:1.506px;color:#000;">−1</div>
<div class="t" style="left:1065.50px;top:721.69px;font-size:11px;line-height:11px;letter-spacing:1.506px;color:#000;">−1</div>
<div class="t" style="left:1140.50px;top:721.69px;font-size:11px;line-height:11px;letter-spacing:1.506px;color:#000;">−1</div>
<div class="t" style="left:1215.50px;top:721.69px;font-size:11px;line-height:11px;letter-spacing:1.470px;color:#000;">50</div>
<div class="t" style="left:465.50px;top:739.69px;font-size:11px;line-height:11px;letter-spacing:0.980px;color:#000;">1024</div>
<div class="t" style="left:540.50px;top:739.69px;font-size:11px;line-height:11px;letter-spacing:0.681px;color:#000;">c0:3f:e:62:…</div>
<div class="t" style="left:615.50px;top:739.69px;font-size:11px;line-height:11px;letter-spacing:0.900px;color:#000;">32779881…</div>
<div class="t" style="left:690.50px;top:739.69px;font-size:11px;line-height:11px;letter-spacing:0.854px;color:#000;">46.73476…</div>
<div class="t" style="left:765.50px;top:739.69px;font-size:11px;line-height:11px;letter-spacing:0.834px;color:#000;">−117.0210…</div>
<div class="t" style="left:840.50px;top:739.69px;font-size:11px;line-height:11px;letter-spacing:1.103px;color:#000;">158</div>
<div class="t" style="left:915.50px;top:739.69px;font-size:11px;line-height:11px;letter-spacing:0.000px;color:#000;">0</div>
<div class="t" style="left:990.50px;top:739.69px;font-size:11px;line-height:11px;letter-spacing:1.506px;color:#000;">−1</div>
<div class="t" style="left:1065.50px;top:739.69px;font-size:11px;line-height:11px;letter-spacing:1.506px;color:#000;">−1</div>
<div class="t" style="left:1140.50px;top:739.69px;font-size:11px;line-height:11px;letter-spacing:1.506px;color:#000;">−1</div>
<div class="t" style="left:1215.50px;top:739.69px;font-size:11px;line-height:11px;letter-spacing:1.470px;color:#000;">50</div>
<div class="t" style="left:465.50px;top:757.69px;font-size:11px;line-height:11px;letter-spacing:0.980px;color:#000;">1025</div>
<div class="t" style="left:540.50px;top:757.69px;font-size:11px;line-height:11px;letter-spacing:0.734px;color:#000;">c0:c1:c0:9…</div>
<div class="t" style="left:615.50px;top:757.69px;font-size:11px;line-height:11px;letter-spacing:0.900px;color:#000;">32779881…</div>
<div class="t" style="left:690.50px;top:757.69px;font-size:11px;line-height:11px;letter-spacing:0.854px;color:#000;">46.73601…</div>
<div class="t" style="left:765.50px;top:757.69px;font-size:11px;line-height:11px;letter-spacing:0.834px;color:#000;">−117.0360…</div>
<div class="t" style="left:840.50px;top:757.69px;font-size:11px;line-height:11px;letter-spacing:1.103px;color:#000;">233</div>
<div class="t" style="left:915.50px;top:757.69px;font-size:11px;line-height:11px;letter-spacing:0.000px;color:#000;">0</div>
<div class="t" style="left:990.50px;top:757.69px;font-size:11px;line-height:11px;letter-spacing:1.506px;color:#000;">−1</div>
<div class="t" style="left:1065.50px;top:757.69px;font-size:11px;line-height:11px;letter-spacing:1.506px;color:#000;">−1</div>
<div class="t" style="left:1140.50px;top:757.69px;font-size:11px;line-height:11px;letter-spacing:1.506px;color:#000;">−1</div>
<div class="t" style="left:1215.50px;top:757.69px;font-size:11px;line-height:11px;letter-spacing:1.470px;color:#000;">50</div>
<div class="t" style="left:465.50px;top:775.69px;font-size:11px;line-height:11px;letter-spacing:0.980px;color:#000;">1029</div>
<div class="t" style="left:540.50px;top:775.69px;font-size:11px;line-height:11px;letter-spacing:0.759px;color:#000;">0:23:69:1…</div>
<div class="t" style="left:615.50px;top:775.69px;font-size:11px;line-height:11px;letter-spacing:0.900px;color:#000;">32779881…</div>
<div class="t" style="left:690.50px;top:775.69px;font-size:11px;line-height:11px;letter-spacing:0.776px;color:#000;">46.7355234</div>
<div class="t" style="left:765.50px;top:775.69px;font-size:11px;line-height:11px;letter-spacing:0.834px;color:#000;">−117.0212…</div>
<div class="t" style="left:840.50px;top:775.69px;font-size:11px;line-height:11px;letter-spacing:1.103px;color:#000;">135</div>
<div class="t" style="left:915.50px;top:775.69px;font-size:11px;line-height:11px;letter-spacing:0.000px;color:#000;">0</div>
<div class="t" style="left:990.50px;top:775.69px;font-size:11px;line-height:11px;letter-spacing:1.506px;color:#000;">−1</div>
<div class="t" style="left:1065.50px;top:775.69px;font-size:11px;line-height:11px;letter-spacing:1.506px;color:#000;">−1</div>
<div class="t" style="left:1140.50px;top:775.69px;font-size:11px;line-height:11px;letter-spacing:1.506px;color:#000;">−1</div>
<div class="t" style="left:1215.50px;top:775.69px;font-size:11px;line-height:11px;letter-spacing:1.470px;color:#000;">50</div>
<div class="r" style="left:1277px;top:141px;width:15px;height:641px;background:linear-gradient(90deg,#c4c4c4,#e4e4e4 25%,#fbfbfb 60%,#f4f4f4);"></div>
<div class="r" style="left:1277px;top:141px;width:15px;height:609px;background:linear-gradient(90deg,#c8c8c8,#e8e8e8 22%,#fdfdfd 62%,#f2f2f2);border-radius:0 0 7.5px 7.5px;box-shadow:0 1.5px 1.5px rgba(0,0,0,.28);"></div>
<div class="r" style="left:1277px;top:141px;width:15px;height:8px;background:linear-gradient(90deg,#d0d0d0,#f4f4f4 40%,#fff);"></div>
<div class="r" style="left:1278px;top:147px;width:13px;height:208px;box-sizing:border-box;border-radius:6.5px;border:1px solid #1030b8;border-right-color:#5a6a80;background:linear-gradient(90deg,#0a3ad0 0,#6aa8f0 18%,#a0ccf6 30%,#3a98f0 48%,#7ccaf8 75%,#a0e4fe 92%,#6a9ad0 100%);"></div>
<svg class="r" style="left:1280px;top:754px" width="10" height="7" viewBox="0 0 10 7"><path d="M5 0.5 L9 6 H1Z" fill="#555"/></svg>
<div class="r" style="left:1277px;top:765px;width:15px;height:1px;background:#d4d4d4;"></div>
<svg class="r" style="left:1280px;top:770px" width="10" height="7" viewBox="0 0 10 7"><path d="M5 6.5 L9 1 H1Z" fill="#555"/></svg>
<div class="r" style="left:462px;top:782px;width:815px;height:15px;background:linear-gradient(#c4c4c4,#e4e4e4 25%,#fbfbfb 60%,#f4f4f4);border-left:1px solid #a4a4a4;box-sizing:border-box;"></div>
<div class="r" style="left:463px;top:782px;width:781px;height:15px;background:linear-gradient(#c8c8c8,#e8e8e8 22%,#fdfdfd 62%,#f2f2f2);border-radius:0 7.5px 7.5px 0;box-shadow:1.5px 0 1.5px rgba(0,0,0,.28);"></div>
<div class="r" style="left:469px;top:783px;width:763px;height:13px;box-sizing:border-box;border-radius:6.5px;border:1px solid #1030b8;border-bottom-color:#4a5a70;background:linear-gradient(#0a3ad0 0,#6aa8f0 18%,#a0ccf6 30%,#3a98f0 48%,#7ccaf8 75%,#a0e4fe 92%,#6a9ad0 100%);"></div>
<svg class="r" style="left:1248px;top:786px" width="7" height="9" viewBox="0 0 7 9"><path d="M0.5 4.5 L6 0.5 V8.5Z" fill="#555"/></svg>
<div class="r" style="left:1259px;top:782px;width:1px;height:15px;background:#d4d4d4;"></div>
<svg class="r" style="left:1265px;top:786px" width="7" height="9" viewBox="0 0 7 9"><path d="M6.5 4.5 L1 0.5 V8.5Z" fill="#555"/></svg>
<div class="r" style="left:1276px;top:782px;width:16px;height:15px;background:#fff;"></div>
<div class="r" style="left:465px;top:803px;width:77px;height:18px;box-sizing:border-box;border:1px solid #8e8e8e;border-radius:9.0px;background:linear-gradient(#ffffff,#f8f8f8 40%,#e8e8e8 55%,#f2f2f2 85%,#fafafa);box-shadow:0 1px 1px rgba(0,0,0,.18)"></div>
<div class="t" style="left:496.50px;top:806.69px;font-size:11px;line-height:11px;letter-spacing:1.156px;color:#7a7a7a;">&lt;&lt;</div>
<div class="r" style="left:557px;top:803px;width:77px;height:18px;box-sizing:border-box;border:1px solid #8e8e8e;border-radius:9.0px;background:linear-gradient(#ffffff,#f8f8f8 40%,#e8e8e8 55%,#f2f2f2 85%,#fafafa);box-shadow:0 1px 1px rgba(0,0,0,.18)"></div>
<div class="t" style="left:592.00px;top:806.69px;font-size:11px;line-height:11px;letter-spacing:0.000px;color:#7a7a7a;">&lt;</div>
<div class="t" style="left:646.80px;top:806.69px;font-size:11px;line-height:11px;letter-spacing:0.000px;color:#111;font-weight:bold;">1</div>
<div class="t" style="left:664.80px;top:806.69px;font-size:11px;line-height:11px;letter-spacing:1.012px;color:#111;">to</div>
<div class="t" style="left:688.80px;top:806.69px;font-size:11px;line-height:11px;letter-spacing:1.113px;color:#111;font-weight:bold;">100</div>
<div class="t" style="left:721.50px;top:806.69px;font-size:11px;line-height:11px;letter-spacing:1.012px;color:#111;">of</div>
<div class="t" style="left:744.70px;top:806.69px;font-size:11px;line-height:11px;letter-spacing:1.169px;color:#111;font-weight:bold;">87451</div>
<div class="r" style="left:794px;top:803px;width:77px;height:18px;box-sizing:border-box;border:1px solid #8e8e8e;border-radius:9.0px;background:linear-gradient(#ffffff,#f8f8f8 40%,#e8e8e8 55%,#f2f2f2 85%,#fafafa);box-shadow:0 1px 1px rgba(0,0,0,.18)"></div>
<div class="t" style="left:829.00px;top:806.69px;font-size:11px;line-height:11px;letter-spacing:0.000px;color:#000;">&gt;</div>
<div class="r" style="left:885px;top:803px;width:77px;height:18px;box-sizing:border-box;border:1px solid #8e8e8e;border-radius:9.0px;background:linear-gradient(#ffffff,#f8f8f8 40%,#e8e8e8 55%,#f2f2f2 85%,#fafafa);box-shadow:0 1px 1px rgba(0,0,0,.18)"></div>
<div class="t" style="left:916.50px;top:806.69px;font-size:11px;line-height:11px;letter-spacing:1.156px;color:#000;">&gt;&gt;</div>
<div class="r" style="left:1317px;top:2px;width:2px;height:840px;background:#3c4444;border-top-right-radius:3px;"></div>
<div class="r" style="left:0px;top:840px;width:1319px;height:2px;background:#3a3a3a;"></div>
</body></html>
